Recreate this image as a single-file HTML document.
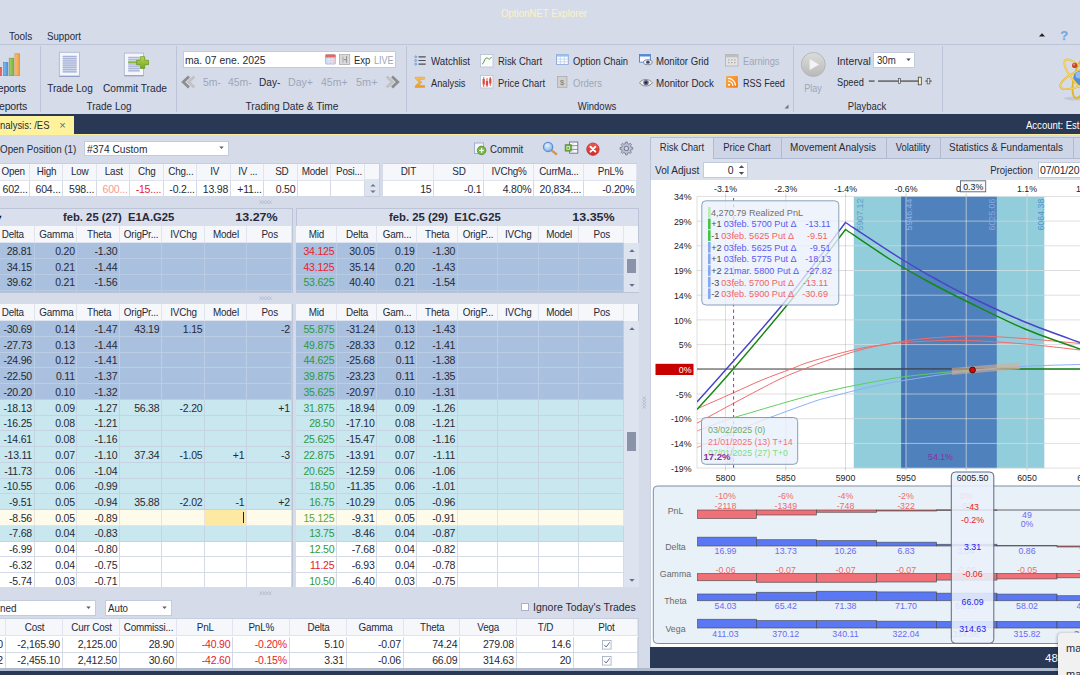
<!DOCTYPE html>
<html><head><meta charset="utf-8"><title>OptionNET Explorer</title>
<style>
html,body{margin:0;padding:0}
html{overflow:hidden;width:1080px;height:675px}
body{width:1080px;height:675px;overflow:hidden;position:relative;background:#d6dbe9;font:10.5px "Liberation Sans",sans-serif;letter-spacing:-0.2px;color:#262a38}
.a{position:absolute;overflow:hidden}
.t{position:absolute;line-height:16px;height:16px;white-space:nowrap}
svg text{letter-spacing:0}
</style></head><body>
<div class="t" style="top:4.8px;left:444.1px;width:200px;text-align:center;color:#fbf3c4;letter-spacing:0px;transform:scaleX(0.9172);transform-origin:center center;">OptionNET Explorer</div>
<div class="t" style="top:28px;left:8.7px;letter-spacing:0px;transform:scaleX(0.9504);transform-origin:left center;">Tools</div>
<div class="t" style="top:28px;left:46.5px;letter-spacing:0px;transform:scaleX(0.9244);transform-origin:left center;">Support</div>
<svg class="a" style="left:1036px;top:30px" width="40" height="14" viewBox="0 0 40 14"><path d="M3 6.6 L6 3.2 L9 6.6 Z" fill="#1e1e1e"/><text x="28.3" y="9.9" font-family="Liberation Sans, sans-serif" font-weight="bold" font-size="13" fill="#6aa5de" stroke="#8fbce8" stroke-width=".3" text-anchor="middle">?</text></svg>
<div class="a" style="left:0px;top:44px;width:1080px;height:1px;background:#bcc5d8;"></div>
<div class="a" style="left:40px;top:46px;width:1px;height:66px;background:#bcc5d8;"></div>
<div class="a" style="left:176px;top:46px;width:1px;height:66px;background:#bcc5d8;"></div>
<div class="a" style="left:406px;top:46px;width:1px;height:66px;background:#bcc5d8;"></div>
<div class="a" style="left:793px;top:46px;width:1px;height:66px;background:#bcc5d8;"></div>
<div class="a" style="left:942px;top:46px;width:1px;height:66px;background:#bcc5d8;"></div>
<svg class="a" style="left:0;top:52px" width="22" height="26" viewBox="0 52 22 26"><defs><linearGradient id="bo" x1="0" x2="1"><stop offset="0" stop-color="#fbc07a"/><stop offset="1" stop-color="#ee9a3e"/></linearGradient><linearGradient id="bgn" x1="0" x2="1"><stop offset="0" stop-color="#a6d26a"/><stop offset="1" stop-color="#7bb041"/></linearGradient><linearGradient id="bb" x1="0" x2="1"><stop offset="0" stop-color="#7fbaf0"/><stop offset="1" stop-color="#4f92d6"/></linearGradient></defs><rect x="-3.2" y="67.3" width="4.5" height="8.4" fill="#e8635a" stroke="#c0463e" stroke-width=".6"/><rect x="3.6" y="62.3" width="4.3" height="13.4" fill="url(#bb)" stroke="#4a86c4" stroke-width=".6"/><rect x="9.2" y="58.2" width="4.5" height="17.5" fill="url(#bgn)" stroke="#6f9f3c" stroke-width=".6"/><rect x="14.9" y="53.8" width="4.8" height="21.9" fill="url(#bo)" stroke="#d98a38" stroke-width=".6"/></svg>
<div class="t" style="top:80px;left:-2.2px;">eports</div>
<div class="t" style="top:98px;left:-1px;">eports</div>
<svg class="a" style="left:56px;top:50px" width="28" height="30" viewBox="56 50 28 30"><rect x="59.6" y="53" width="20" height="24" fill="#8d98be" opacity=".35"/><rect x="59.4" y="52.3" width="20.1" height="23.8" fill="#f5f7fc" stroke="#b3bcda" stroke-width="1"/><path d="M59.4 76.4h20.1" stroke="#8f9bc2" stroke-width="1"/><rect x="62.7" y="55.7" width="14" height="17.3" fill="#d3daee"/><rect x="62.7" y="55.90" width="14" height="1.15" fill="#a9b3d6"/><rect x="62.7" y="58.08" width="14" height="1.15" fill="#a9b3d6"/><rect x="62.7" y="60.26" width="14" height="1.15" fill="#a9b3d6"/><rect x="62.7" y="62.44" width="14" height="1.15" fill="#a9b3d6"/><rect x="62.7" y="64.62" width="14" height="1.15" fill="#a9b3d6"/><rect x="62.7" y="66.80" width="14" height="1.15" fill="#a9b3d6"/><rect x="62.7" y="68.98" width="14" height="1.15" fill="#a9b3d6"/><rect x="62.7" y="71.16" width="14" height="1.15" fill="#a9b3d6"/></svg>
<div class="t" style="top:80px;left:-29.8px;width:200px;text-align:center;letter-spacing:0px;transform:scaleX(0.9582);transform-origin:center center;">Trade Log</div>
<svg class="a" style="left:122px;top:50px" width="30" height="30" viewBox="122 50 30 30"><defs><linearGradient id="pl" x1="0" y1="0" x2="0" y2="1"><stop offset="0" stop-color="#b4d84c"/><stop offset="1" stop-color="#76a628"/></linearGradient></defs><rect x="124.5" y="53.8" width="19" height="22.3" fill="#8d98be" opacity=".3"/><rect x="124.3" y="53.1" width="19.2" height="22.4" fill="#f5f7fc" stroke="#b3bcda" stroke-width="1"/><path d="M124.3 75.8h19.2" stroke="#8f9bc2" stroke-width="1"/><rect x="128.2" y="56.7" width="11.4" height="15.3" fill="#d6dcef"/><rect x="128.2" y="56.90" width="11.4" height="1.15" fill="#adb7d8"/><rect x="128.2" y="59.10" width="11.4" height="1.15" fill="#adb7d8"/><rect x="128.2" y="61.30" width="11.4" height="1.15" fill="#adb7d8"/><rect x="128.2" y="63.50" width="11.4" height="1.15" fill="#adb7d8"/><rect x="128.2" y="65.70" width="11.4" height="1.15" fill="#adb7d8"/><rect x="128.2" y="67.90" width="11.4" height="1.15" fill="#adb7d8"/><rect x="128.2" y="70.10" width="11.4" height="1.15" fill="#adb7d8"/><rect x="128.2" y="61.5" width="10" height="1.7" fill="#86b83a"/><path d="M140.3 56.7h4.4v3.6h3.8v4.4h-3.8v3.7h-4.4v-3.7h-3.7v-4.4h3.7z" fill="url(#pl)" stroke="#6b9a22" stroke-width=".8" stroke-linejoin="round"/></svg>
<div class="t" style="top:80px;left:35.0px;width:200px;text-align:center;letter-spacing:0px;transform:scaleX(0.9706);transform-origin:center center;">Commit Trade</div>
<div class="t" style="top:98px;left:8.7px;width:200px;text-align:center;letter-spacing:0px;transform:scaleX(0.9477);transform-origin:center center;">Trade Log</div>
<div class="a" style="left:183px;top:51px;width:213px;height:17px;background:#fff;border:1px solid #c3cbdc;box-sizing:border-box;"></div>
<div class="t" style="top:52px;left:184.5px;letter-spacing:0px;transform:scaleX(0.9849);transform-origin:left center;">ma. 07 ene. 2025</div>
<svg class="a" style="left:325px;top:54px" width="26" height="11" viewBox="0 0 26 11"><rect x=".5" y=".5" width="10" height="9.6" rx="1" fill="#cfd8f2" stroke="#9fabd6" stroke-width=".7"/><path d="M.5 1.3a.8 .8 0 0 1 .8-.8h8.4a.8 .8 0 0 1 .8 .8v2.1H.5z" fill="#e7695a"/><rect x="7.6" y="3.4" width="2.9" height="6.6" fill="#ecc0c4" opacity=".8"/><path d="M.8 5.6h9.4M.8 7.8h9.4M3.9 3.4v6.6M7.3 3.4v6.6" stroke="#e9eefb" stroke-width=".5"/><rect x="14.5" y=".3" width="10.2" height="10.2" fill="#d9d9d9" stroke="#ababab" stroke-width=".8"/><path d="M17.9 2.6v6.2" stroke="#b4b4b4" stroke-width="1.2"/><path d="M21.6 2.2v6.6M18.6 5.6l2.6 .1" stroke="#858585" stroke-width=".9"/></svg>
<div class="t" style="top:52px;left:353.7px;letter-spacing:0px;transform:scaleX(0.9009);transform-origin:left center;">Exp</div>
<div class="t" style="top:52px;left:373.7px;color:#9ea6b8;letter-spacing:0px;transform:scaleX(0.8566);transform-origin:left center;">LIVE</div>
<svg class="a" style="left:181px;top:75px" width="15" height="14" viewBox="0 0 15 14"><path d="M13.4 1.4 L7.6 7 L13.4 12.6" fill="none" stroke="#c2c2c2" stroke-width="2.8"/><path d="M8 1.4 L2.2 7 L8 12.6" fill="none" stroke="#8e8e8e" stroke-width="2.8"/></svg>
<svg class="a" style="left:385px;top:75px" width="15" height="14" viewBox="0 0 15 14"><path d="M1.6 1.4 L7.4 7 L1.6 12.6" fill="none" stroke="#c2c2c2" stroke-width="2.8"/><path d="M7 1.4 L12.8 7 L7 12.6" fill="none" stroke="#8e8e8e" stroke-width="2.8"/></svg>
<div class="t" style="top:74px;left:203.3px;color:#9ea6b8;letter-spacing:0px;transform:scaleX(0.9948);transform-origin:left center;">5m-</div>
<div class="t" style="top:74px;left:228.3px;color:#9ea6b8;letter-spacing:0px;transform:scaleX(0.9943);transform-origin:left center;">45m-</div>
<div class="t" style="top:74px;left:259.3px;color:#262a38;letter-spacing:0px;transform:scaleX(0.9607);transform-origin:left center;">Day-</div>
<div class="t" style="top:74px;left:287.5px;color:#9ea6b8;letter-spacing:0px;transform:scaleX(1.0076);transform-origin:left center;">Day+</div>
<div class="t" style="top:74px;left:320.5px;color:#9ea6b8;letter-spacing:0px;transform:scaleX(0.9976);transform-origin:left center;">45m+</div>
<div class="t" style="top:74px;left:355.5px;color:#9ea6b8;letter-spacing:0px;transform:scaleX(1.0377);transform-origin:left center;">5m+</div>
<div class="t" style="top:98px;left:191.5px;width:200px;text-align:center;letter-spacing:0px;transform:scaleX(0.9697);transform-origin:center center;">Trading Date &amp; Time</div>
<svg class="a" style="left:413.6px;top:54.6px" width="12.6" height="11" viewBox="0 0 14 13" preserveAspectRatio="none"><circle cx="1.9" cy="2.2" r="1.1" fill="none" stroke="#4a86d0" stroke-width=".8"/><circle cx="1.9" cy="6.5" r="1.1" fill="none" stroke="#4a86d0" stroke-width=".8"/><circle cx="1.9" cy="10.8" r="1.1" fill="none" stroke="#4a86d0" stroke-width=".8"/><path d="M5 2.2h8M5 6.5h8M5 10.8h8" stroke="#4a4e58" stroke-width="1.25"/></svg>
<div class="t" style="top:52.5px;left:430.5px;letter-spacing:0px;transform:scaleX(0.9241);transform-origin:left center;">Watchlist</div>
<svg class="a" style="left:414px;top:75.6px" width="12.2" height="12.6" viewBox="0 0 14 15" preserveAspectRatio="none"><defs><linearGradient id="sg" x1="0" y1="0" x2="0" y2="1"><stop offset="0" stop-color="#fbc45c"/><stop offset="1" stop-color="#f09a28"/></linearGradient></defs><path d="M1.5 1.5h10.5v2.4h-6.6l3.7 3.6-3.7 3.8h6.8v2.3H1.5v-1.9l4.4-4.2L1.5 3.3z" fill="url(#sg)" stroke="#dc9428" stroke-width=".6"/></svg>
<div class="t" style="top:74.7px;left:430.5px;letter-spacing:0px;transform:scaleX(0.8821);transform-origin:left center;">Analysis</div>
<svg class="a" style="left:480px;top:54px" width="14" height="14" viewBox="0 0 14 14"><rect x=".5" y=".5" width="12.5" height="12.5" fill="#fafbfd" stroke="#b9c0d2" stroke-width=".8"/><path d="M2 10c2.2 0 2.2-6 4.6-6s2 3 5-1" fill="none" stroke="#5a9a3a" stroke-width="1"/></svg>
<div class="t" style="top:52.5px;left:497.5px;letter-spacing:0px;transform:scaleX(0.8977);transform-origin:left center;">Risk Chart</div>
<svg class="a" style="left:480px;top:75px" width="14" height="14" viewBox="0 0 14 14"><rect x=".5" y=".5" width="12.5" height="12.5" fill="#fafbfd" stroke="#b9c0d2" stroke-width=".8"/><path d="M3.7 2v10M7 3v9M10.3 2v9" stroke="#d63a2f" stroke-width=".8"/><rect x="2.6" y="4" width="2.2" height="5.5" fill="#e2473b"/><rect x="5.9" y="6" width="2.2" height="4.5" fill="#e2473b"/><rect x="9.2" y="3.5" width="2.2" height="5" fill="#e2473b"/></svg>
<div class="t" style="top:74.7px;left:497.5px;letter-spacing:0px;transform:scaleX(0.895);transform-origin:left center;">Price Chart</div>
<svg class="a" style="left:556px;top:54.4px" width="13.2" height="11.2" viewBox="0 0 14 13" preserveAspectRatio="none"><rect x=".5" y=".5" width="12.5" height="11.5" fill="#fff" stroke="#7f9fd6" stroke-width=".9"/><rect x=".5" y=".5" width="12.5" height="2.6" fill="#9cc0ee"/><path d="M.5 6h12.5M.5 9h12.5M4.6 3v9M8.8 3v9" stroke="#a9c4ea" stroke-width=".7"/></svg>
<div class="t" style="top:52.5px;left:573px;letter-spacing:0px;transform:scaleX(0.8973);transform-origin:left center;">Option Chain</div>
<svg class="a" style="left:557px;top:76px" width="10.8" height="12.2" viewBox="0 0 13 14" preserveAspectRatio="none"><rect x=".5" y=".5" width="11.5" height="12.5" fill="#d0d0d0" stroke="#a9a9a9" stroke-width=".9"/><text x="6.2" y="10.3" font-family="Liberation Sans, sans-serif" font-weight="bold" font-size="9" fill="#8a8a8a" text-anchor="middle">$</text></svg>
<div class="t" style="top:74.7px;left:573px;color:#9ea6b8;letter-spacing:0px;transform:scaleX(0.9036);transform-origin:left center;">Orders</div>
<svg class="a" style="left:639.2px;top:54.4px" width="14.2" height="12" viewBox="0 0 15 14" preserveAspectRatio="none"><rect x=".5" y=".5" width="11.5" height="9" fill="#f6f9ff" stroke="#4a78c0" stroke-width=".9"/><rect x=".5" y=".5" width="11.5" height="2.4" fill="#4d8ad8"/><ellipse cx="9.4" cy="9.6" rx="4.6" ry="2.9" fill="#eef0f4" stroke="#5e6470" stroke-width=".8"/><circle cx="9.4" cy="9.6" r="1.9" fill="#3a4a72"/></svg>
<div class="t" style="top:52.5px;left:656.2px;letter-spacing:0px;transform:scaleX(0.914);transform-origin:left center;">Monitor Grid</div>
<svg class="a" style="left:639px;top:77px" width="15" height="11" viewBox="0 0 15 11"><path d="M.6 5.8C3 1.4 10.4 1.4 13.4 5.8 10.4 10 3 10 .6 5.8z" fill="#f0f1f5" stroke="#8a7a70" stroke-width=".9"/><circle cx="7" cy="5.6" r="2.7" fill="#5a6a8a"/><circle cx="7" cy="5.6" r="1.2" fill="#1c2030"/></svg>
<div class="t" style="top:74.7px;left:656.2px;letter-spacing:0px;transform:scaleX(0.9344);transform-origin:left center;">Monitor Dock</div>
<svg class="a" style="left:725px;top:54px" width="14" height="13" viewBox="0 0 14 13"><rect x=".5" y=".5" width="12.5" height="11.5" fill="#e3e3e3" stroke="#b5b5b5" stroke-width=".9"/><rect x=".5" y=".5" width="12.5" height="2.8" fill="#bdbdbd"/><path d="M3 5.8h1.6M6 5.8h1.6M9 5.8h1.6M3 8.6h1.6M6 8.6h1.6M9 8.6h1.6" stroke="#b0b0b0" stroke-width="1.3"/></svg>
<div class="t" style="top:52.5px;left:742.5px;color:#9ea6b8;letter-spacing:0px;transform:scaleX(0.8805);transform-origin:left center;">Earnings</div>
<svg class="a" style="left:726px;top:76px" width="12.4" height="12.2" viewBox="0 0 13 13" preserveAspectRatio="none"><defs><linearGradient id="rg" x1="0" y1="0" x2="1" y2="1"><stop offset="0" stop-color="#fbab4e"/><stop offset="1" stop-color="#f07c10"/></linearGradient></defs><rect x="0" y="0" width="12.5" height="12.5" rx="1" fill="url(#rg)"/><circle cx="3.2" cy="9.4" r="1.2" fill="#fff"/><path d="M2.2 5.4a5 5 0 0 1 5 5M2.2 2.6a7.8 7.8 0 0 1 7.8 7.8" fill="none" stroke="#fff" stroke-width="1.3"/></svg>
<div class="t" style="top:74.7px;left:742.5px;letter-spacing:0px;transform:scaleX(0.8627);transform-origin:left center;">RSS Feed</div>
<div class="t" style="top:98px;left:497.2px;width:200px;text-align:center;letter-spacing:0px;transform:scaleX(0.9036);transform-origin:center center;">Windows</div>
<svg class="a" style="left:784px;top:104px" width="5" height="5" viewBox="0 0 5 5"><path d="M4.5 .5v4h-4z" fill="#6f7480"/></svg>
<svg class="a" style="left:800px;top:51px" width="27" height="27" viewBox="0 0 27 27"><defs><linearGradient id="pg" x1="0" y1="0" x2="0" y2="1"><stop offset="0" stop-color="#dcdcdc"/><stop offset="1" stop-color="#b9b9b9"/></linearGradient></defs><circle cx="13.3" cy="13.5" r="12" fill="url(#pg)" stroke="#b0b0b0" stroke-width=".8"/><path d="M9.8 8.2 L18.8 13.5 L9.8 18.8z" fill="#f4f4f4" stroke="#e8e8e8" stroke-width=".6"/></svg>
<div class="t" style="top:80px;left:713.2px;width:200px;text-align:center;color:#9ea6b8;letter-spacing:0px;transform:scaleX(0.8563);transform-origin:center center;">Play</div>
<div class="t" style="top:52.5px;left:836.9px;letter-spacing:0px;transform:scaleX(0.9815);transform-origin:left center;">Interval</div>
<div class="a" style="left:873px;top:52px;width:42px;height:16px;background:#fff;border:1px solid #c3cbdc;box-sizing:border-box;"></div>
<div class="t" style="top:52.3px;left:877px;letter-spacing:0px;transform:scaleX(0.9199);transform-origin:left center;">30m</div>
<svg class="a" style="left:905.5px;top:58.3px" width="5" height="3.4" viewBox="0 0 6 4"><path d="M.4 .5h5.2L3 3.5z" fill="#454a58"/></svg>
<div class="t" style="top:73.8px;left:836.9px;letter-spacing:0px;transform:scaleX(0.8823);transform-origin:left center;">Speed</div>
<svg class="a" style="left:867px;top:75px" width="68" height="13" viewBox="0 0 68 13"><rect x="1.8" y="5.3" width="5.8" height="1.6" fill="#6a6a6a"/><rect x="11" y="5.3" width="42" height="1.6" fill="#6a6a6a"/><rect x="31.6" y="3.6" width="1.8" height="5" fill="#e4e4e4" stroke="#555" stroke-width=".7"/><rect x="51.3" y="2.2" width="3" height="7.6" fill="#fdf6c0" stroke="#444" stroke-width=".8"/><rect x="58.4" y="5.3" width="6.2" height="1.6" fill="#6a6a6a"/><rect x="60.2" y="3.3" width="2.6" height="5.6" fill="#e4e4e4" stroke="#555" stroke-width=".7"/></svg>
<div class="t" style="top:98px;left:767.1px;width:200px;text-align:center;letter-spacing:0px;transform:scaleX(0.8989);transform-origin:center center;">Playback</div>
<svg class="a" style="left:1050px;top:50px" width="30" height="54" viewBox="1050 50 30 54"><ellipse cx="1078" cy="98.5" rx="14" ry="2" fill="#c2c8d8"/><g fill="none" stroke="#e3b528" stroke-width="1.9"><ellipse cx="1081" cy="77.7" rx="22.5" ry="7.5" transform="rotate(-24 1081 77.7)"/><ellipse cx="1081" cy="77.7" rx="7" ry="21" transform="rotate(14 1081 77.7)"/></g><circle cx="1081.5" cy="77.7" r="7.8" fill="#4f8fdc"/><circle cx="1079" cy="75" r="3.6" fill="#9cc6f4" opacity=".85"/><g fill="none" stroke="#e9c033" stroke-width="1.9"><ellipse cx="1081" cy="77.7" rx="23.5" ry="7.5" transform="rotate(48 1081 77.7)"/></g><g fill="none" stroke="#f7e08a" stroke-width=".7"><ellipse cx="1081" cy="77.7" rx="22.5" ry="7.5" transform="rotate(-24 1081 77.7)"/><ellipse cx="1081" cy="77.7" rx="23.5" ry="7.5" transform="rotate(48 1081 77.7)"/></g><circle cx="1074.7" cy="65.4" r="2.7" fill="#c4492c"/><circle cx="1074" cy="64.6" r="1" fill="#e8907a"/></svg>
<div class="a" style="left:0px;top:113.9px;width:1080px;height:20.2px;background:#293955;"></div>
<div class="a" style="left:0px;top:134px;width:1080px;height:1.4px;background:#fbee9e;"></div>
<div class="a" style="left:0px;top:116px;width:74.2px;height:19px;background:#fff29d;"></div>
<div class="t" style="top:117px;left:-0.5px;letter-spacing:0px;transform:scaleX(0.9023);transform-origin:left center;">nalysis: /ES</div>
<div class="t" style="top:117.3px;left:59.2px;color:#5d6b82;font-size:11px;">×</div>
<div class="t" style="top:116.5px;left:1026.2px;color:#fff;letter-spacing:0px;transform:scaleX(0.9075);transform-origin:left center;">Account: Est</div>
<div class="t" style="top:140.6px;left:-0.3px;letter-spacing:0px;transform:scaleX(0.9337);transform-origin:left center;">Open Position (1)</div>
<div class="a" style="left:84px;top:141px;width:144.5px;height:14.5px;background:#fff;border:1px solid #c3cbdc;box-sizing:border-box;"></div>
<div class="t" style="top:140.6px;left:87px;letter-spacing:0px;transform:scaleX(0.9687);transform-origin:left center;">#374 Custom</div>
<svg class="a" style="left:219px;top:146px" width="5" height="3.4" viewBox="0 0 6 4"><path d="M.4 .5h5.2L3 3.5z" fill="#555b6b"/></svg>
<svg class="a" style="left:473px;top:142px" width="14" height="14" viewBox="0 0 14 14"><rect x="1.5" y="1" width="9" height="10.5" fill="#f4f6fb" stroke="#9da8c8" stroke-width=".9"/><circle cx="8.6" cy="8.4" r="4.3" fill="#74b944" stroke="#4b8a28" stroke-width=".7"/><path d="M6.3 8.4h4.6M8.6 6.1v4.6" stroke="#fff" stroke-width="1.3"/></svg>
<div class="t" style="top:140.6px;left:490px;letter-spacing:0px;transform:scaleX(0.9206);transform-origin:left center;">Commit</div>
<svg class="a" style="left:541px;top:140px" width="18" height="18" viewBox="541 140 18 18"><defs><radialGradient id="mg" cx=".4" cy=".35" r=".7"><stop offset="0" stop-color="#e4f2fd"/><stop offset="1" stop-color="#7db4ea"/></radialGradient></defs><path d="M551.6 150.4l4.6 3.6" stroke="#d6974a" stroke-width="2.3" stroke-linecap="round"/><circle cx="548.1" cy="146.9" r="4.6" fill="url(#mg)" stroke="#5d8fd2" stroke-width="1.3"/></svg>
<svg class="a" style="left:563px;top:140px" width="17" height="16" viewBox="563 140 17 16"><rect x="569.6" y="142" width="8.2" height="11.2" fill="#f9fafc" stroke="#69718a" stroke-width=".9"/><path d="M569.6 145.7h8.2M569.6 149.4h8.2" stroke="#69718a" stroke-width=".8"/><path d="M573 142v11.2" stroke="#b9c0d2" stroke-width=".6"/><rect x="565.1" y="144.7" width="6.2" height="6.4" fill="#6aa83c" stroke="#4c8426" stroke-width=".6"/><rect x="566.9" y="146.5" width="2.6" height="2.8" fill="none" stroke="#e9f5dc" stroke-width=".8"/></svg>
<svg class="a" style="left:586.2px;top:141.6px" width="14.4" height="14.4" viewBox="0 0 16 16"><defs><linearGradient id="rx" x1="0" y1="0" x2="0" y2="1"><stop offset="0" stop-color="#ee5a50"/><stop offset="1" stop-color="#d42a26"/></linearGradient></defs><circle cx="7.7" cy="8" r="6.9" fill="url(#rx)" stroke="#b83028" stroke-width=".8"/><path d="M5 5.3l5.4 5.4M10.4 5.3L5 10.7" stroke="#fff" stroke-width="2.1" stroke-linecap="round"/></svg>
<svg class="a" style="left:618px;top:140px" width="17" height="17" viewBox="618 140 17 17"><path d="M625.37 143.61L625.55 142.06L627.25 142.06L627.43 143.61L629.06 144.28L630.28 143.31L631.49 144.52L630.52 145.74L631.19 147.37L632.74 147.55L632.74 149.25L631.19 149.43L630.52 151.06L631.49 152.28L630.28 153.49L629.06 152.52L627.43 153.19L627.25 154.74L625.55 154.74L625.37 153.19L623.74 152.52L622.52 153.49L621.31 152.28L622.28 151.06L621.61 149.43L620.06 149.25L620.06 147.55L621.61 147.37L622.28 145.74L621.31 144.52L622.52 143.31L623.74 144.28z" fill="#bcc2d1" stroke="#7c849b" stroke-width="1" stroke-linejoin="round"/><circle cx="626.4" cy="148.4" r="2.1" fill="#d6dbe9" stroke="#7c849b" stroke-width="1.1"/></svg>
<div class="a" style="left:-4px;top:163.2px;width:383.5px;height:34px;background:#fff;border:1px solid #c6cee0;box-sizing:border-box;"></div>
<div class="a" style="left:-4px;top:164.2px;width:34.2px;height:16.5px;background:#f5f7fb;border-right:1px solid #dfe4ee;border-bottom:1px solid #dfe4ee;box-sizing:border-box;"></div><div class="t" style="top:163.35px;left:-13.9px;width:54.2px;text-align:center;transform:scaleX(.94);">Open</div>
<div class="a" style="left:30.2px;top:164.2px;width:33.0px;height:16.5px;background:#f5f7fb;border-right:1px solid #dfe4ee;border-bottom:1px solid #dfe4ee;box-sizing:border-box;"></div><div class="t" style="top:163.35px;left:20.3px;width:53.0px;text-align:center;transform:scaleX(.94);">High</div>
<div class="a" style="left:63.2px;top:164.2px;width:33.5px;height:16.5px;background:#f5f7fb;border-right:1px solid #dfe4ee;border-bottom:1px solid #dfe4ee;box-sizing:border-box;"></div><div class="t" style="top:163.35px;left:53.3px;width:53.5px;text-align:center;transform:scaleX(.94);">Low</div>
<div class="a" style="left:96.7px;top:164.2px;width:33.499999999999986px;height:16.5px;background:#f5f7fb;border-right:1px solid #dfe4ee;border-bottom:1px solid #dfe4ee;box-sizing:border-box;"></div><div class="t" style="top:163.35px;left:86.8px;width:53.499999999999986px;text-align:center;transform:scaleX(.94);">Last</div>
<div class="a" style="left:130.2px;top:164.2px;width:33.5px;height:16.5px;background:#f5f7fb;border-right:1px solid #dfe4ee;border-bottom:1px solid #dfe4ee;box-sizing:border-box;"></div><div class="t" style="top:163.35px;left:120.3px;width:53.5px;text-align:center;transform:scaleX(.94);">Chg</div>
<div class="a" style="left:163.7px;top:164.2px;width:33.70000000000002px;height:16.5px;background:#f5f7fb;border-right:1px solid #dfe4ee;border-bottom:1px solid #dfe4ee;box-sizing:border-box;"></div><div class="t" style="top:163.35px;left:153.8px;width:53.70000000000002px;text-align:center;transform:scaleX(.94);">Chg...</div>
<div class="a" style="left:197.4px;top:164.2px;width:33.29999999999998px;height:16.5px;background:#f5f7fb;border-right:1px solid #dfe4ee;border-bottom:1px solid #dfe4ee;box-sizing:border-box;"></div><div class="t" style="top:163.35px;left:187.5px;width:53.29999999999998px;text-align:center;transform:scaleX(.94);">IV</div>
<div class="a" style="left:230.7px;top:164.2px;width:33.69999999999999px;height:16.5px;background:#f5f7fb;border-right:1px solid #dfe4ee;border-bottom:1px solid #dfe4ee;box-sizing:border-box;"></div><div class="t" style="top:163.35px;left:220.8px;width:53.69999999999999px;text-align:center;transform:scaleX(.94);">IV ...</div>
<div class="a" style="left:264.4px;top:164.2px;width:33.60000000000002px;height:16.5px;background:#f5f7fb;border-right:1px solid #dfe4ee;border-bottom:1px solid #dfe4ee;box-sizing:border-box;"></div><div class="t" style="top:163.35px;left:254.5px;width:53.60000000000002px;text-align:center;transform:scaleX(.94);">SD</div>
<div class="a" style="left:298px;top:164.2px;width:33.39999999999998px;height:16.5px;background:#f5f7fb;border-right:1px solid #dfe4ee;border-bottom:1px solid #dfe4ee;box-sizing:border-box;"></div><div class="t" style="top:163.35px;left:288.1px;width:53.39999999999998px;text-align:center;transform:scaleX(.94);">Model</div>
<div class="a" style="left:331.4px;top:164.2px;width:34.10000000000002px;height:16.5px;background:#f5f7fb;border-right:1px solid #dfe4ee;border-bottom:1px solid #dfe4ee;box-sizing:border-box;"></div><div class="t" style="top:163.35px;left:321.5px;width:54.10000000000002px;text-align:center;transform:scaleX(.94);">Posi...</div>
<div class="a" style="left:-4px;top:180.7px;width:34.2px;height:16.400000000000006px;background:#fff;border-right:1px solid #d3d9e6;border-bottom:1px solid #d3d9e6;box-sizing:border-box;"></div><div class="t" style="top:180.7px;right:1052.4px;text-align:right;">602...</div>
<div class="a" style="left:30.2px;top:180.7px;width:33.0px;height:16.400000000000006px;background:#fff;border-right:1px solid #d3d9e6;border-bottom:1px solid #d3d9e6;box-sizing:border-box;"></div><div class="t" style="top:180.7px;right:1019.4px;text-align:right;">604...</div>
<div class="a" style="left:63.2px;top:180.7px;width:33.5px;height:16.400000000000006px;background:#fff;border-right:1px solid #d3d9e6;border-bottom:1px solid #d3d9e6;box-sizing:border-box;"></div><div class="t" style="top:180.7px;right:985.9px;text-align:right;">598...</div>
<div class="a" style="left:96.7px;top:180.7px;width:33.499999999999986px;height:16.400000000000006px;background:#fff;border-right:1px solid #d3d9e6;border-bottom:1px solid #d3d9e6;box-sizing:border-box;"></div><div class="t" style="top:180.7px;right:952.4px;text-align:right;color:#f59a9a;">600...</div>
<div class="a" style="left:130.2px;top:180.7px;width:33.5px;height:16.400000000000006px;background:#fff;border-right:1px solid #d3d9e6;border-bottom:1px solid #d3d9e6;box-sizing:border-box;"></div><div class="t" style="top:180.7px;right:918.9px;text-align:right;color:#e8202a;">-15....</div>
<div class="a" style="left:163.7px;top:180.7px;width:33.70000000000002px;height:16.400000000000006px;background:#fff;border-right:1px solid #d3d9e6;border-bottom:1px solid #d3d9e6;box-sizing:border-box;"></div><div class="t" style="top:180.7px;right:885.2px;text-align:right;">-0.2...</div>
<div class="a" style="left:197.4px;top:180.7px;width:33.29999999999998px;height:16.400000000000006px;background:#fff;border-right:1px solid #d3d9e6;border-bottom:1px solid #d3d9e6;box-sizing:border-box;"></div><div class="t" style="top:180.7px;right:851.9px;text-align:right;">13.98</div>
<div class="a" style="left:230.7px;top:180.7px;width:33.69999999999999px;height:16.400000000000006px;background:#fff;border-right:1px solid #d3d9e6;border-bottom:1px solid #d3d9e6;box-sizing:border-box;"></div><div class="t" style="top:180.7px;right:818.2px;text-align:right;">+11...</div>
<div class="a" style="left:264.4px;top:180.7px;width:33.60000000000002px;height:16.400000000000006px;background:#fff;border-right:1px solid #d3d9e6;border-bottom:1px solid #d3d9e6;box-sizing:border-box;"></div><div class="t" style="top:180.7px;right:784.6px;text-align:right;">0.50</div>
<div class="a" style="left:298px;top:180.7px;width:33.39999999999998px;height:16.400000000000006px;background:#fff;border-right:1px solid #d3d9e6;border-bottom:1px solid #d3d9e6;box-sizing:border-box;"></div>
<div class="a" style="left:331.4px;top:180.7px;width:34.10000000000002px;height:16.400000000000006px;background:#fff;border-right:1px solid #d3d9e6;border-bottom:1px solid #d3d9e6;box-sizing:border-box;"></div>
<div class="a" style="left:365px;top:163.5px;width:14.3px;height:16.5px;background:#f5f7fb;border-bottom:1px solid #dfe4ee;box-sizing:border-box;"></div>
<div class="a" style="left:365px;top:180px;width:14.3px;height:16.3px;background:#dde3ef;"></div>
<svg class="a" style="left:368.5px;top:182px" width="8" height="13" viewBox="0 0 8 13"><path d="M1.3 4.6L4 1.9l2.7 2.7z" fill="#6f778c"/><path d="M1.3 8.4L4 11.1l2.7-2.7z" fill="#6f778c"/></svg>
<div class="a" style="left:383px;top:163.2px;width:254px;height:34px;background:#fff;border:1px solid #c6cee0;box-sizing:border-box;"></div>
<div class="a" style="left:383.3px;top:164.2px;width:50.69999999999999px;height:16.5px;background:#f5f7fb;border-right:1px solid #dfe4ee;border-bottom:1px solid #dfe4ee;box-sizing:border-box;"></div><div class="t" style="top:163.35px;left:373.4px;width:70.69999999999999px;text-align:center;transform:scaleX(.94);">DIT</div>
<div class="a" style="left:434px;top:164.2px;width:50px;height:16.5px;background:#f5f7fb;border-right:1px solid #dfe4ee;border-bottom:1px solid #dfe4ee;box-sizing:border-box;"></div><div class="t" style="top:163.35px;left:424.1px;width:70px;text-align:center;transform:scaleX(.94);">SD</div>
<div class="a" style="left:484px;top:164.2px;width:50.10000000000002px;height:16.5px;background:#f5f7fb;border-right:1px solid #dfe4ee;border-bottom:1px solid #dfe4ee;box-sizing:border-box;"></div><div class="t" style="top:163.35px;left:474.1px;width:70.10000000000002px;text-align:center;transform:scaleX(.94);">IVChg%</div>
<div class="a" style="left:534.1px;top:164.2px;width:49.799999999999955px;height:16.5px;background:#f5f7fb;border-right:1px solid #dfe4ee;border-bottom:1px solid #dfe4ee;box-sizing:border-box;"></div><div class="t" style="top:163.35px;left:524.2px;width:69.79999999999995px;text-align:center;transform:scaleX(.94);">CurrMa...</div>
<div class="a" style="left:583.9px;top:164.2px;width:53.10000000000002px;height:16.5px;background:#f5f7fb;border-right:1px solid #dfe4ee;border-bottom:1px solid #dfe4ee;box-sizing:border-box;"></div><div class="t" style="top:163.35px;left:574.0px;width:73.10000000000002px;text-align:center;transform:scaleX(.94);">PnL%</div>
<div class="a" style="left:383.3px;top:180.7px;width:50.69999999999999px;height:16.400000000000006px;background:#fff;border-right:1px solid #d3d9e6;border-bottom:1px solid #d3d9e6;box-sizing:border-box;"></div><div class="t" style="top:180.7px;right:648.6px;text-align:right;">15</div>
<div class="a" style="left:434px;top:180.7px;width:50px;height:16.400000000000006px;background:#fff;border-right:1px solid #d3d9e6;border-bottom:1px solid #d3d9e6;box-sizing:border-box;"></div><div class="t" style="top:180.7px;right:598.6px;text-align:right;">-0.1</div>
<div class="a" style="left:484px;top:180.7px;width:50.10000000000002px;height:16.400000000000006px;background:#fff;border-right:1px solid #d3d9e6;border-bottom:1px solid #d3d9e6;box-sizing:border-box;"></div><div class="t" style="top:180.7px;right:548.5px;text-align:right;">4.80%</div>
<div class="a" style="left:534.1px;top:180.7px;width:49.799999999999955px;height:16.400000000000006px;background:#fff;border-right:1px solid #d3d9e6;border-bottom:1px solid #d3d9e6;box-sizing:border-box;"></div><div class="t" style="top:180.7px;right:498.7px;text-align:right;">20,834....</div>
<div class="a" style="left:583.9px;top:180.7px;width:53.10000000000002px;height:16.400000000000006px;background:#fff;border-right:1px solid #d3d9e6;border-bottom:1px solid #d3d9e6;box-sizing:border-box;"></div><div class="t" style="top:180.7px;right:445.6px;text-align:right;">-0.20%</div>
<svg class="a" style="left:259px;top:200px" width="13" height="5" viewBox="0 0 13 5"><path d="M.5 .5l3 3.5M.5 4l3-3.5M3.5 .5l3 3.5M3.5 4l3-3.5M6.5 .5l3 3.5M6.5 4l3-3.5M9.5 .5l3 3.5M9.5 4l3-3.5" stroke="#aeb6c9" stroke-width=".7" fill="none"/></svg>
<div class="a" style="left:-9px;top:207.5px;width:301.5px;height:85px;background:#dfe4ef;border:1px solid #bcc5d8;box-sizing:border-box;"></div>
<div class="a" style="left:296px;top:207.5px;width:342.5px;height:85px;background:#dfe4ef;border:1px solid #bcc5d8;box-sizing:border-box;"></div>
<div class="a" style="left:-8px;top:208.5px;width:299.5px;height:17px;background:#d9dfec;"></div>
<div class="a" style="left:297px;top:208.5px;width:340.5px;height:17px;background:#d9dfec;"></div>
<div class="t" style="top:209.6px;left:-5.5px;color:#14161e;font-size:9px;">▼</div>
<div class="t" style="top:209px;left:62.5px;font-weight:bold;letter-spacing:0;letter-spacing:0px;transform:scaleX(1.0713);transform-origin:left center;white-space:pre;">feb. 25 (27)  E1A.G25</div>
<div class="t" style="top:209px;right:802.5px;text-align:right;font-weight:bold;letter-spacing:0;letter-spacing:0px;transform:scaleX(1.1874);transform-origin:right center;">13.27%</div>
<div class="t" style="top:209px;left:389.3px;font-weight:bold;letter-spacing:0;letter-spacing:0px;transform:scaleX(1.0752);transform-origin:left center;white-space:pre;">feb. 25 (29)  E1C.G25</div>
<div class="t" style="top:209px;right:465px;text-align:right;font-weight:bold;letter-spacing:0;letter-spacing:0px;transform:scaleX(1.1874);transform-origin:right center;">13.35%</div>
<div class="a" style="left:0;top:0;width:1080px;height:291.8px"><div class="a" style="left:-9px;top:226.0px;width:43.6px;height:17.30000000000001px;background:#f5f7fb;border-right:1px solid #dfe4ee;border-bottom:1px solid #dfe4ee;box-sizing:border-box;"></div><div class="t" style="top:225.55px;left:-18.9px;width:63.6px;text-align:center;transform:scaleX(.94);">Delta</div>
<div class="a" style="left:34.6px;top:226.0px;width:42.800000000000004px;height:17.30000000000001px;background:#f5f7fb;border-right:1px solid #dfe4ee;border-bottom:1px solid #dfe4ee;box-sizing:border-box;"></div><div class="t" style="top:225.55px;left:24.7px;width:62.800000000000004px;text-align:center;transform:scaleX(.94);">Gamma</div>
<div class="a" style="left:77.4px;top:226.0px;width:42.5px;height:17.30000000000001px;background:#f5f7fb;border-right:1px solid #dfe4ee;border-bottom:1px solid #dfe4ee;box-sizing:border-box;"></div><div class="t" style="top:225.55px;left:67.5px;width:62.5px;text-align:center;transform:scaleX(.94);">Theta</div>
<div class="a" style="left:119.9px;top:226.0px;width:42.099999999999994px;height:17.30000000000001px;background:#f5f7fb;border-right:1px solid #dfe4ee;border-bottom:1px solid #dfe4ee;box-sizing:border-box;"></div><div class="t" style="top:225.55px;left:110.0px;width:62.099999999999994px;text-align:center;transform:scaleX(.94);">OrigPr...</div>
<div class="a" style="left:162px;top:226.0px;width:43.099999999999994px;height:17.30000000000001px;background:#f5f7fb;border-right:1px solid #dfe4ee;border-bottom:1px solid #dfe4ee;box-sizing:border-box;"></div><div class="t" style="top:225.55px;left:152.1px;width:63.099999999999994px;text-align:center;transform:scaleX(.94);">IVChg</div>
<div class="a" style="left:205.1px;top:226.0px;width:41.900000000000006px;height:17.30000000000001px;background:#f5f7fb;border-right:1px solid #dfe4ee;border-bottom:1px solid #dfe4ee;box-sizing:border-box;"></div><div class="t" style="top:225.55px;left:195.2px;width:61.900000000000006px;text-align:center;transform:scaleX(.94);">Model</div>
<div class="a" style="left:247px;top:226.0px;width:45.39999999999998px;height:17.30000000000001px;background:#f5f7fb;border-right:1px solid #dfe4ee;border-bottom:1px solid #dfe4ee;box-sizing:border-box;"></div><div class="t" style="top:225.55px;left:237.1px;width:65.39999999999998px;text-align:center;transform:scaleX(.94);">Pos</div>
<div class="a" style="left:-9px;top:243.3px;width:43.6px;height:15.740000000000009px;background:#a9c0de;border-right:1px solid #b9cbe4;border-bottom:1px solid #b9cbe4;box-sizing:border-box;"></div><div class="t" style="top:242.97px;right:1048.0px;text-align:right;">28.81</div>
<div class="a" style="left:34.6px;top:243.3px;width:42.800000000000004px;height:15.740000000000009px;background:#a9c0de;border-right:1px solid #b9cbe4;border-bottom:1px solid #b9cbe4;box-sizing:border-box;"></div><div class="t" style="top:242.97px;right:1005.2px;text-align:right;">0.20</div>
<div class="a" style="left:77.4px;top:243.3px;width:42.5px;height:15.740000000000009px;background:#a9c0de;border-right:1px solid #b9cbe4;border-bottom:1px solid #b9cbe4;box-sizing:border-box;"></div><div class="t" style="top:242.97px;right:962.7px;text-align:right;">-1.30</div>
<div class="a" style="left:119.9px;top:243.3px;width:42.099999999999994px;height:15.740000000000009px;background:#a9c0de;border-right:1px solid #b9cbe4;border-bottom:1px solid #b9cbe4;box-sizing:border-box;"></div>
<div class="a" style="left:162px;top:243.3px;width:43.099999999999994px;height:15.740000000000009px;background:#a9c0de;border-right:1px solid #b9cbe4;border-bottom:1px solid #b9cbe4;box-sizing:border-box;"></div>
<div class="a" style="left:205.1px;top:243.3px;width:41.900000000000006px;height:15.740000000000009px;background:#a9c0de;border-right:1px solid #b9cbe4;border-bottom:1px solid #b9cbe4;box-sizing:border-box;"></div>
<div class="a" style="left:247px;top:243.3px;width:45.39999999999998px;height:15.740000000000009px;background:#a9c0de;border-right:1px solid #b9cbe4;border-bottom:1px solid #b9cbe4;box-sizing:border-box;"></div>
<div class="a" style="left:-9px;top:259.04px;width:43.6px;height:15.740000000000009px;background:#a9c0de;border-right:1px solid #b9cbe4;border-bottom:1px solid #b9cbe4;box-sizing:border-box;"></div><div class="t" style="top:258.71px;right:1048.0px;text-align:right;">34.15</div>
<div class="a" style="left:34.6px;top:259.04px;width:42.800000000000004px;height:15.740000000000009px;background:#a9c0de;border-right:1px solid #b9cbe4;border-bottom:1px solid #b9cbe4;box-sizing:border-box;"></div><div class="t" style="top:258.71px;right:1005.2px;text-align:right;">0.21</div>
<div class="a" style="left:77.4px;top:259.04px;width:42.5px;height:15.740000000000009px;background:#a9c0de;border-right:1px solid #b9cbe4;border-bottom:1px solid #b9cbe4;box-sizing:border-box;"></div><div class="t" style="top:258.71px;right:962.7px;text-align:right;">-1.44</div>
<div class="a" style="left:119.9px;top:259.04px;width:42.099999999999994px;height:15.740000000000009px;background:#a9c0de;border-right:1px solid #b9cbe4;border-bottom:1px solid #b9cbe4;box-sizing:border-box;"></div>
<div class="a" style="left:162px;top:259.04px;width:43.099999999999994px;height:15.740000000000009px;background:#a9c0de;border-right:1px solid #b9cbe4;border-bottom:1px solid #b9cbe4;box-sizing:border-box;"></div>
<div class="a" style="left:205.1px;top:259.04px;width:41.900000000000006px;height:15.740000000000009px;background:#a9c0de;border-right:1px solid #b9cbe4;border-bottom:1px solid #b9cbe4;box-sizing:border-box;"></div>
<div class="a" style="left:247px;top:259.04px;width:45.39999999999998px;height:15.740000000000009px;background:#a9c0de;border-right:1px solid #b9cbe4;border-bottom:1px solid #b9cbe4;box-sizing:border-box;"></div>
<div class="a" style="left:-9px;top:274.78000000000003px;width:43.6px;height:15.740000000000009px;background:#a9c0de;border-right:1px solid #b9cbe4;border-bottom:1px solid #b9cbe4;box-sizing:border-box;"></div><div class="t" style="top:274.45px;right:1048.0px;text-align:right;">39.62</div>
<div class="a" style="left:34.6px;top:274.78000000000003px;width:42.800000000000004px;height:15.740000000000009px;background:#a9c0de;border-right:1px solid #b9cbe4;border-bottom:1px solid #b9cbe4;box-sizing:border-box;"></div><div class="t" style="top:274.45px;right:1005.2px;text-align:right;">0.21</div>
<div class="a" style="left:77.4px;top:274.78000000000003px;width:42.5px;height:15.740000000000009px;background:#a9c0de;border-right:1px solid #b9cbe4;border-bottom:1px solid #b9cbe4;box-sizing:border-box;"></div><div class="t" style="top:274.45px;right:962.7px;text-align:right;">-1.56</div>
<div class="a" style="left:119.9px;top:274.78000000000003px;width:42.099999999999994px;height:15.740000000000009px;background:#a9c0de;border-right:1px solid #b9cbe4;border-bottom:1px solid #b9cbe4;box-sizing:border-box;"></div>
<div class="a" style="left:162px;top:274.78000000000003px;width:43.099999999999994px;height:15.740000000000009px;background:#a9c0de;border-right:1px solid #b9cbe4;border-bottom:1px solid #b9cbe4;box-sizing:border-box;"></div>
<div class="a" style="left:205.1px;top:274.78000000000003px;width:41.900000000000006px;height:15.740000000000009px;background:#a9c0de;border-right:1px solid #b9cbe4;border-bottom:1px solid #b9cbe4;box-sizing:border-box;"></div>
<div class="a" style="left:247px;top:274.78000000000003px;width:45.39999999999998px;height:15.740000000000009px;background:#a9c0de;border-right:1px solid #b9cbe4;border-bottom:1px solid #b9cbe4;box-sizing:border-box;"></div>
<div class="a" style="left:-9px;top:290.52000000000004px;width:43.6px;height:15.740000000000009px;background:#a9c0de;border-right:1px solid #b9cbe4;border-bottom:1px solid #b9cbe4;box-sizing:border-box;"></div>
<div class="a" style="left:34.6px;top:290.52000000000004px;width:42.800000000000004px;height:15.740000000000009px;background:#a9c0de;border-right:1px solid #b9cbe4;border-bottom:1px solid #b9cbe4;box-sizing:border-box;"></div>
<div class="a" style="left:77.4px;top:290.52000000000004px;width:42.5px;height:15.740000000000009px;background:#a9c0de;border-right:1px solid #b9cbe4;border-bottom:1px solid #b9cbe4;box-sizing:border-box;"></div>
<div class="a" style="left:119.9px;top:290.52000000000004px;width:42.099999999999994px;height:15.740000000000009px;background:#a9c0de;border-right:1px solid #b9cbe4;border-bottom:1px solid #b9cbe4;box-sizing:border-box;"></div>
<div class="a" style="left:162px;top:290.52000000000004px;width:43.099999999999994px;height:15.740000000000009px;background:#a9c0de;border-right:1px solid #b9cbe4;border-bottom:1px solid #b9cbe4;box-sizing:border-box;"></div>
<div class="a" style="left:205.1px;top:290.52000000000004px;width:41.900000000000006px;height:15.740000000000009px;background:#a9c0de;border-right:1px solid #b9cbe4;border-bottom:1px solid #b9cbe4;box-sizing:border-box;"></div>
<div class="a" style="left:247px;top:290.52000000000004px;width:45.39999999999998px;height:15.740000000000009px;background:#a9c0de;border-right:1px solid #b9cbe4;border-bottom:1px solid #b9cbe4;box-sizing:border-box;"></div></div>
<div class="a" style="left:0;top:0;width:1080px;height:291.8px"><div class="a" style="left:296px;top:226.0px;width:41px;height:17.30000000000001px;background:#f5f7fb;border-right:1px solid #dfe4ee;border-bottom:1px solid #dfe4ee;box-sizing:border-box;"></div><div class="t" style="top:225.55px;left:286.1px;width:61px;text-align:center;transform:scaleX(.94);">Mid</div>
<div class="a" style="left:337px;top:226.0px;width:40.19999999999999px;height:17.30000000000001px;background:#f5f7fb;border-right:1px solid #dfe4ee;border-bottom:1px solid #dfe4ee;box-sizing:border-box;"></div><div class="t" style="top:225.55px;left:327.1px;width:60.19999999999999px;text-align:center;transform:scaleX(.94);">Delta</div>
<div class="a" style="left:377.2px;top:226.0px;width:40.10000000000002px;height:17.30000000000001px;background:#f5f7fb;border-right:1px solid #dfe4ee;border-bottom:1px solid #dfe4ee;box-sizing:border-box;"></div><div class="t" style="top:225.55px;left:367.3px;width:60.10000000000002px;text-align:center;transform:scaleX(.94);">Gam...</div>
<div class="a" style="left:417.3px;top:226.0px;width:40.5px;height:17.30000000000001px;background:#f5f7fb;border-right:1px solid #dfe4ee;border-bottom:1px solid #dfe4ee;box-sizing:border-box;"></div><div class="t" style="top:225.55px;left:407.4px;width:60.5px;text-align:center;transform:scaleX(.94);">Theta</div>
<div class="a" style="left:457.8px;top:226.0px;width:40.19999999999999px;height:17.30000000000001px;background:#f5f7fb;border-right:1px solid #dfe4ee;border-bottom:1px solid #dfe4ee;box-sizing:border-box;"></div><div class="t" style="top:225.55px;left:447.9px;width:60.19999999999999px;text-align:center;transform:scaleX(.94);">OrigP...</div>
<div class="a" style="left:498px;top:226.0px;width:40.5px;height:17.30000000000001px;background:#f5f7fb;border-right:1px solid #dfe4ee;border-bottom:1px solid #dfe4ee;box-sizing:border-box;"></div><div class="t" style="top:225.55px;left:488.1px;width:60.5px;text-align:center;transform:scaleX(.94);">IVChg</div>
<div class="a" style="left:538.5px;top:226.0px;width:40.299999999999955px;height:17.30000000000001px;background:#f5f7fb;border-right:1px solid #dfe4ee;border-bottom:1px solid #dfe4ee;box-sizing:border-box;"></div><div class="t" style="top:225.55px;left:528.6px;width:60.299999999999955px;text-align:center;transform:scaleX(.94);">Model</div>
<div class="a" style="left:578.8px;top:226.0px;width:45.5px;height:17.30000000000001px;background:#f5f7fb;border-right:1px solid #dfe4ee;border-bottom:1px solid #dfe4ee;box-sizing:border-box;"></div><div class="t" style="top:225.55px;left:568.9px;width:65.5px;text-align:center;transform:scaleX(.94);">Pos</div>
<div class="a" style="left:296px;top:243.3px;width:41px;height:15.740000000000009px;background:#a9c0de;border-right:1px solid #b9cbe4;border-bottom:1px solid #b9cbe4;box-sizing:border-box;"></div><div class="t" style="top:242.97px;right:745.6px;text-align:right;color:#e8202a;">34.125</div>
<div class="a" style="left:337px;top:243.3px;width:40.19999999999999px;height:15.740000000000009px;background:#a9c0de;border-right:1px solid #b9cbe4;border-bottom:1px solid #b9cbe4;box-sizing:border-box;"></div><div class="t" style="top:242.97px;right:705.4px;text-align:right;">30.05</div>
<div class="a" style="left:377.2px;top:243.3px;width:40.10000000000002px;height:15.740000000000009px;background:#a9c0de;border-right:1px solid #b9cbe4;border-bottom:1px solid #b9cbe4;box-sizing:border-box;"></div><div class="t" style="top:242.97px;right:665.3px;text-align:right;">0.19</div>
<div class="a" style="left:417.3px;top:243.3px;width:40.5px;height:15.740000000000009px;background:#a9c0de;border-right:1px solid #b9cbe4;border-bottom:1px solid #b9cbe4;box-sizing:border-box;"></div><div class="t" style="top:242.97px;right:624.8px;text-align:right;">-1.30</div>
<div class="a" style="left:457.8px;top:243.3px;width:40.19999999999999px;height:15.740000000000009px;background:#a9c0de;border-right:1px solid #b9cbe4;border-bottom:1px solid #b9cbe4;box-sizing:border-box;"></div>
<div class="a" style="left:498px;top:243.3px;width:40.5px;height:15.740000000000009px;background:#a9c0de;border-right:1px solid #b9cbe4;border-bottom:1px solid #b9cbe4;box-sizing:border-box;"></div>
<div class="a" style="left:538.5px;top:243.3px;width:40.299999999999955px;height:15.740000000000009px;background:#a9c0de;border-right:1px solid #b9cbe4;border-bottom:1px solid #b9cbe4;box-sizing:border-box;"></div>
<div class="a" style="left:578.8px;top:243.3px;width:45.5px;height:15.740000000000009px;background:#a9c0de;border-right:1px solid #b9cbe4;border-bottom:1px solid #b9cbe4;box-sizing:border-box;"></div>
<div class="a" style="left:296px;top:259.04px;width:41px;height:15.740000000000009px;background:#a9c0de;border-right:1px solid #b9cbe4;border-bottom:1px solid #b9cbe4;box-sizing:border-box;"></div><div class="t" style="top:258.71px;right:745.6px;text-align:right;color:#e8202a;">43.125</div>
<div class="a" style="left:337px;top:259.04px;width:40.19999999999999px;height:15.740000000000009px;background:#a9c0de;border-right:1px solid #b9cbe4;border-bottom:1px solid #b9cbe4;box-sizing:border-box;"></div><div class="t" style="top:258.71px;right:705.4px;text-align:right;">35.14</div>
<div class="a" style="left:377.2px;top:259.04px;width:40.10000000000002px;height:15.740000000000009px;background:#a9c0de;border-right:1px solid #b9cbe4;border-bottom:1px solid #b9cbe4;box-sizing:border-box;"></div><div class="t" style="top:258.71px;right:665.3px;text-align:right;">0.20</div>
<div class="a" style="left:417.3px;top:259.04px;width:40.5px;height:15.740000000000009px;background:#a9c0de;border-right:1px solid #b9cbe4;border-bottom:1px solid #b9cbe4;box-sizing:border-box;"></div><div class="t" style="top:258.71px;right:624.8px;text-align:right;">-1.43</div>
<div class="a" style="left:457.8px;top:259.04px;width:40.19999999999999px;height:15.740000000000009px;background:#a9c0de;border-right:1px solid #b9cbe4;border-bottom:1px solid #b9cbe4;box-sizing:border-box;"></div>
<div class="a" style="left:498px;top:259.04px;width:40.5px;height:15.740000000000009px;background:#a9c0de;border-right:1px solid #b9cbe4;border-bottom:1px solid #b9cbe4;box-sizing:border-box;"></div>
<div class="a" style="left:538.5px;top:259.04px;width:40.299999999999955px;height:15.740000000000009px;background:#a9c0de;border-right:1px solid #b9cbe4;border-bottom:1px solid #b9cbe4;box-sizing:border-box;"></div>
<div class="a" style="left:578.8px;top:259.04px;width:45.5px;height:15.740000000000009px;background:#a9c0de;border-right:1px solid #b9cbe4;border-bottom:1px solid #b9cbe4;box-sizing:border-box;"></div>
<div class="a" style="left:296px;top:274.78000000000003px;width:41px;height:15.740000000000009px;background:#a9c0de;border-right:1px solid #b9cbe4;border-bottom:1px solid #b9cbe4;box-sizing:border-box;"></div><div class="t" style="top:274.45px;right:745.6px;text-align:right;color:#2e9a3c;">53.625</div>
<div class="a" style="left:337px;top:274.78000000000003px;width:40.19999999999999px;height:15.740000000000009px;background:#a9c0de;border-right:1px solid #b9cbe4;border-bottom:1px solid #b9cbe4;box-sizing:border-box;"></div><div class="t" style="top:274.45px;right:705.4px;text-align:right;">40.40</div>
<div class="a" style="left:377.2px;top:274.78000000000003px;width:40.10000000000002px;height:15.740000000000009px;background:#a9c0de;border-right:1px solid #b9cbe4;border-bottom:1px solid #b9cbe4;box-sizing:border-box;"></div><div class="t" style="top:274.45px;right:665.3px;text-align:right;">0.21</div>
<div class="a" style="left:417.3px;top:274.78000000000003px;width:40.5px;height:15.740000000000009px;background:#a9c0de;border-right:1px solid #b9cbe4;border-bottom:1px solid #b9cbe4;box-sizing:border-box;"></div><div class="t" style="top:274.45px;right:624.8px;text-align:right;">-1.54</div>
<div class="a" style="left:457.8px;top:274.78000000000003px;width:40.19999999999999px;height:15.740000000000009px;background:#a9c0de;border-right:1px solid #b9cbe4;border-bottom:1px solid #b9cbe4;box-sizing:border-box;"></div>
<div class="a" style="left:498px;top:274.78000000000003px;width:40.5px;height:15.740000000000009px;background:#a9c0de;border-right:1px solid #b9cbe4;border-bottom:1px solid #b9cbe4;box-sizing:border-box;"></div>
<div class="a" style="left:538.5px;top:274.78000000000003px;width:40.299999999999955px;height:15.740000000000009px;background:#a9c0de;border-right:1px solid #b9cbe4;border-bottom:1px solid #b9cbe4;box-sizing:border-box;"></div>
<div class="a" style="left:578.8px;top:274.78000000000003px;width:45.5px;height:15.740000000000009px;background:#a9c0de;border-right:1px solid #b9cbe4;border-bottom:1px solid #b9cbe4;box-sizing:border-box;"></div>
<div class="a" style="left:296px;top:290.52000000000004px;width:41px;height:15.740000000000009px;background:#a9c0de;border-right:1px solid #b9cbe4;border-bottom:1px solid #b9cbe4;box-sizing:border-box;"></div>
<div class="a" style="left:337px;top:290.52000000000004px;width:40.19999999999999px;height:15.740000000000009px;background:#a9c0de;border-right:1px solid #b9cbe4;border-bottom:1px solid #b9cbe4;box-sizing:border-box;"></div>
<div class="a" style="left:377.2px;top:290.52000000000004px;width:40.10000000000002px;height:15.740000000000009px;background:#a9c0de;border-right:1px solid #b9cbe4;border-bottom:1px solid #b9cbe4;box-sizing:border-box;"></div>
<div class="a" style="left:417.3px;top:290.52000000000004px;width:40.5px;height:15.740000000000009px;background:#a9c0de;border-right:1px solid #b9cbe4;border-bottom:1px solid #b9cbe4;box-sizing:border-box;"></div>
<div class="a" style="left:457.8px;top:290.52000000000004px;width:40.19999999999999px;height:15.740000000000009px;background:#a9c0de;border-right:1px solid #b9cbe4;border-bottom:1px solid #b9cbe4;box-sizing:border-box;"></div>
<div class="a" style="left:498px;top:290.52000000000004px;width:40.5px;height:15.740000000000009px;background:#a9c0de;border-right:1px solid #b9cbe4;border-bottom:1px solid #b9cbe4;box-sizing:border-box;"></div>
<div class="a" style="left:538.5px;top:290.52000000000004px;width:40.299999999999955px;height:15.740000000000009px;background:#a9c0de;border-right:1px solid #b9cbe4;border-bottom:1px solid #b9cbe4;box-sizing:border-box;"></div>
<div class="a" style="left:578.8px;top:290.52000000000004px;width:45.5px;height:15.740000000000009px;background:#a9c0de;border-right:1px solid #b9cbe4;border-bottom:1px solid #b9cbe4;box-sizing:border-box;"></div></div>
<div class="a" style="left:624px;top:225.5px;width:14px;height:17.8px;background:#f5f7fb;"></div>
<div class="a" style="left:624px;top:243.3px;width:14.5px;height:48.30000000000001px;background:#dde3ef;"></div><svg class="a" style="left:627.5px;top:248.3px" width="8" height="5" viewBox="0 0 8 5"><path d="M1.3 4L4 1.3 6.7 4z" fill="#666e83"/></svg><svg class="a" style="left:627.5px;top:282.6px" width="8" height="5" viewBox="0 0 8 5"><path d="M1.3 1L4 3.7 6.7 1z" fill="#666e83"/></svg><div class="a" style="left:627px;top:259px;width:8.5px;height:14px;background:#8a93a8;"></div>
<svg class="a" style="left:259px;top:296px" width="13" height="5" viewBox="0 0 13 5"><path d="M.5 .5l3 3.5M.5 4l3-3.5M3.5 .5l3 3.5M3.5 4l3-3.5M6.5 .5l3 3.5M6.5 4l3-3.5M9.5 .5l3 3.5M9.5 4l3-3.5" stroke="#aeb6c9" stroke-width=".7" fill="none"/></svg>
<div class="a" style="left:-9px;top:303.5px;width:301.5px;height:283.7px;background:#fff;border:1px solid #bcc5d8;box-sizing:border-box;border-bottom:none;"></div>
<div class="a" style="left:296px;top:303.5px;width:342.5px;height:283.7px;background:#fff;border:1px solid #bcc5d8;box-sizing:border-box;border-bottom:none;"></div>
<div class="a" style="left:0;top:0;width:1080px;height:587.4px"><div class="a" style="left:-9px;top:304.0px;width:43.6px;height:17.19999999999999px;background:#f5f7fb;border-right:1px solid #dfe4ee;border-bottom:1px solid #dfe4ee;box-sizing:border-box;"></div><div class="t" style="top:303.5px;left:-18.9px;width:63.6px;text-align:center;transform:scaleX(.94);">Delta</div>
<div class="a" style="left:34.6px;top:304.0px;width:42.800000000000004px;height:17.19999999999999px;background:#f5f7fb;border-right:1px solid #dfe4ee;border-bottom:1px solid #dfe4ee;box-sizing:border-box;"></div><div class="t" style="top:303.5px;left:24.7px;width:62.800000000000004px;text-align:center;transform:scaleX(.94);">Gamma</div>
<div class="a" style="left:77.4px;top:304.0px;width:42.5px;height:17.19999999999999px;background:#f5f7fb;border-right:1px solid #dfe4ee;border-bottom:1px solid #dfe4ee;box-sizing:border-box;"></div><div class="t" style="top:303.5px;left:67.5px;width:62.5px;text-align:center;transform:scaleX(.94);">Theta</div>
<div class="a" style="left:119.9px;top:304.0px;width:42.099999999999994px;height:17.19999999999999px;background:#f5f7fb;border-right:1px solid #dfe4ee;border-bottom:1px solid #dfe4ee;box-sizing:border-box;"></div><div class="t" style="top:303.5px;left:110.0px;width:62.099999999999994px;text-align:center;transform:scaleX(.94);">OrigPr...</div>
<div class="a" style="left:162px;top:304.0px;width:43.099999999999994px;height:17.19999999999999px;background:#f5f7fb;border-right:1px solid #dfe4ee;border-bottom:1px solid #dfe4ee;box-sizing:border-box;"></div><div class="t" style="top:303.5px;left:152.1px;width:63.099999999999994px;text-align:center;transform:scaleX(.94);">IVChg</div>
<div class="a" style="left:205.1px;top:304.0px;width:41.900000000000006px;height:17.19999999999999px;background:#f5f7fb;border-right:1px solid #dfe4ee;border-bottom:1px solid #dfe4ee;box-sizing:border-box;"></div><div class="t" style="top:303.5px;left:195.2px;width:61.900000000000006px;text-align:center;transform:scaleX(.94);">Model</div>
<div class="a" style="left:247px;top:304.0px;width:45.39999999999998px;height:17.19999999999999px;background:#f5f7fb;border-right:1px solid #dfe4ee;border-bottom:1px solid #dfe4ee;box-sizing:border-box;"></div><div class="t" style="top:303.5px;left:237.1px;width:65.39999999999998px;text-align:center;transform:scaleX(.94);">Pos</div>
<div class="a" style="left:-9px;top:321.2px;width:43.6px;height:15.740000000000009px;background:#a9c0de;border-right:1px solid #bccde6;border-bottom:1px solid #bccde6;box-sizing:border-box;"></div><div class="t" style="top:320.87px;right:1048.0px;text-align:right;">-30.69</div>
<div class="a" style="left:34.6px;top:321.2px;width:42.800000000000004px;height:15.740000000000009px;background:#a9c0de;border-right:1px solid #bccde6;border-bottom:1px solid #bccde6;box-sizing:border-box;"></div><div class="t" style="top:320.87px;right:1005.2px;text-align:right;">0.14</div>
<div class="a" style="left:77.4px;top:321.2px;width:42.5px;height:15.740000000000009px;background:#a9c0de;border-right:1px solid #bccde6;border-bottom:1px solid #bccde6;box-sizing:border-box;"></div><div class="t" style="top:320.87px;right:962.7px;text-align:right;">-1.47</div>
<div class="a" style="left:119.9px;top:321.2px;width:42.099999999999994px;height:15.740000000000009px;background:#a9c0de;border-right:1px solid #bccde6;border-bottom:1px solid #bccde6;box-sizing:border-box;"></div><div class="t" style="top:320.87px;right:920.6px;text-align:right;">43.19</div>
<div class="a" style="left:162px;top:321.2px;width:43.099999999999994px;height:15.740000000000009px;background:#a9c0de;border-right:1px solid #bccde6;border-bottom:1px solid #bccde6;box-sizing:border-box;"></div><div class="t" style="top:320.87px;right:877.5px;text-align:right;">1.15</div>
<div class="a" style="left:205.1px;top:321.2px;width:41.900000000000006px;height:15.740000000000009px;background:#a9c0de;border-right:1px solid #bccde6;border-bottom:1px solid #bccde6;box-sizing:border-box;"></div>
<div class="a" style="left:247px;top:321.2px;width:45.39999999999998px;height:15.740000000000009px;background:#a9c0de;border-right:1px solid #bccde6;border-bottom:1px solid #bccde6;box-sizing:border-box;"></div><div class="t" style="top:320.87px;right:790.2px;text-align:right;">-2</div>
<div class="a" style="left:-9px;top:336.94px;width:43.6px;height:15.740000000000009px;background:#a9c0de;border-right:1px solid #bccde6;border-bottom:1px solid #bccde6;box-sizing:border-box;"></div><div class="t" style="top:336.61px;right:1048.0px;text-align:right;">-27.73</div>
<div class="a" style="left:34.6px;top:336.94px;width:42.800000000000004px;height:15.740000000000009px;background:#a9c0de;border-right:1px solid #bccde6;border-bottom:1px solid #bccde6;box-sizing:border-box;"></div><div class="t" style="top:336.61px;right:1005.2px;text-align:right;">0.13</div>
<div class="a" style="left:77.4px;top:336.94px;width:42.5px;height:15.740000000000009px;background:#a9c0de;border-right:1px solid #bccde6;border-bottom:1px solid #bccde6;box-sizing:border-box;"></div><div class="t" style="top:336.61px;right:962.7px;text-align:right;">-1.44</div>
<div class="a" style="left:119.9px;top:336.94px;width:42.099999999999994px;height:15.740000000000009px;background:#a9c0de;border-right:1px solid #bccde6;border-bottom:1px solid #bccde6;box-sizing:border-box;"></div>
<div class="a" style="left:162px;top:336.94px;width:43.099999999999994px;height:15.740000000000009px;background:#a9c0de;border-right:1px solid #bccde6;border-bottom:1px solid #bccde6;box-sizing:border-box;"></div>
<div class="a" style="left:205.1px;top:336.94px;width:41.900000000000006px;height:15.740000000000009px;background:#a9c0de;border-right:1px solid #bccde6;border-bottom:1px solid #bccde6;box-sizing:border-box;"></div>
<div class="a" style="left:247px;top:336.94px;width:45.39999999999998px;height:15.740000000000009px;background:#a9c0de;border-right:1px solid #bccde6;border-bottom:1px solid #bccde6;box-sizing:border-box;"></div>
<div class="a" style="left:-9px;top:352.68px;width:43.6px;height:15.740000000000009px;background:#a9c0de;border-right:1px solid #bccde6;border-bottom:1px solid #bccde6;box-sizing:border-box;"></div><div class="t" style="top:352.35px;right:1048.0px;text-align:right;">-24.96</div>
<div class="a" style="left:34.6px;top:352.68px;width:42.800000000000004px;height:15.740000000000009px;background:#a9c0de;border-right:1px solid #bccde6;border-bottom:1px solid #bccde6;box-sizing:border-box;"></div><div class="t" style="top:352.35px;right:1005.2px;text-align:right;">0.12</div>
<div class="a" style="left:77.4px;top:352.68px;width:42.5px;height:15.740000000000009px;background:#a9c0de;border-right:1px solid #bccde6;border-bottom:1px solid #bccde6;box-sizing:border-box;"></div><div class="t" style="top:352.35px;right:962.7px;text-align:right;">-1.41</div>
<div class="a" style="left:119.9px;top:352.68px;width:42.099999999999994px;height:15.740000000000009px;background:#a9c0de;border-right:1px solid #bccde6;border-bottom:1px solid #bccde6;box-sizing:border-box;"></div>
<div class="a" style="left:162px;top:352.68px;width:43.099999999999994px;height:15.740000000000009px;background:#a9c0de;border-right:1px solid #bccde6;border-bottom:1px solid #bccde6;box-sizing:border-box;"></div>
<div class="a" style="left:205.1px;top:352.68px;width:41.900000000000006px;height:15.740000000000009px;background:#a9c0de;border-right:1px solid #bccde6;border-bottom:1px solid #bccde6;box-sizing:border-box;"></div>
<div class="a" style="left:247px;top:352.68px;width:45.39999999999998px;height:15.740000000000009px;background:#a9c0de;border-right:1px solid #bccde6;border-bottom:1px solid #bccde6;box-sizing:border-box;"></div>
<div class="a" style="left:-9px;top:368.42px;width:43.6px;height:15.740000000000009px;background:#a9c0de;border-right:1px solid #bccde6;border-bottom:1px solid #bccde6;box-sizing:border-box;"></div><div class="t" style="top:368.09px;right:1048.0px;text-align:right;">-22.50</div>
<div class="a" style="left:34.6px;top:368.42px;width:42.800000000000004px;height:15.740000000000009px;background:#a9c0de;border-right:1px solid #bccde6;border-bottom:1px solid #bccde6;box-sizing:border-box;"></div><div class="t" style="top:368.09px;right:1005.2px;text-align:right;">0.11</div>
<div class="a" style="left:77.4px;top:368.42px;width:42.5px;height:15.740000000000009px;background:#a9c0de;border-right:1px solid #bccde6;border-bottom:1px solid #bccde6;box-sizing:border-box;"></div><div class="t" style="top:368.09px;right:962.7px;text-align:right;">-1.37</div>
<div class="a" style="left:119.9px;top:368.42px;width:42.099999999999994px;height:15.740000000000009px;background:#a9c0de;border-right:1px solid #bccde6;border-bottom:1px solid #bccde6;box-sizing:border-box;"></div>
<div class="a" style="left:162px;top:368.42px;width:43.099999999999994px;height:15.740000000000009px;background:#a9c0de;border-right:1px solid #bccde6;border-bottom:1px solid #bccde6;box-sizing:border-box;"></div>
<div class="a" style="left:205.1px;top:368.42px;width:41.900000000000006px;height:15.740000000000009px;background:#a9c0de;border-right:1px solid #bccde6;border-bottom:1px solid #bccde6;box-sizing:border-box;"></div>
<div class="a" style="left:247px;top:368.42px;width:45.39999999999998px;height:15.740000000000009px;background:#a9c0de;border-right:1px solid #bccde6;border-bottom:1px solid #bccde6;box-sizing:border-box;"></div>
<div class="a" style="left:-9px;top:384.16px;width:43.6px;height:15.740000000000009px;background:#a9c0de;border-right:1px solid #bccde6;border-bottom:1px solid #bccde6;box-sizing:border-box;"></div><div class="t" style="top:383.83px;right:1048.0px;text-align:right;">-20.20</div>
<div class="a" style="left:34.6px;top:384.16px;width:42.800000000000004px;height:15.740000000000009px;background:#a9c0de;border-right:1px solid #bccde6;border-bottom:1px solid #bccde6;box-sizing:border-box;"></div><div class="t" style="top:383.83px;right:1005.2px;text-align:right;">0.10</div>
<div class="a" style="left:77.4px;top:384.16px;width:42.5px;height:15.740000000000009px;background:#a9c0de;border-right:1px solid #bccde6;border-bottom:1px solid #bccde6;box-sizing:border-box;"></div><div class="t" style="top:383.83px;right:962.7px;text-align:right;">-1.32</div>
<div class="a" style="left:119.9px;top:384.16px;width:42.099999999999994px;height:15.740000000000009px;background:#a9c0de;border-right:1px solid #bccde6;border-bottom:1px solid #bccde6;box-sizing:border-box;"></div>
<div class="a" style="left:162px;top:384.16px;width:43.099999999999994px;height:15.740000000000009px;background:#a9c0de;border-right:1px solid #bccde6;border-bottom:1px solid #bccde6;box-sizing:border-box;"></div>
<div class="a" style="left:205.1px;top:384.16px;width:41.900000000000006px;height:15.740000000000009px;background:#a9c0de;border-right:1px solid #bccde6;border-bottom:1px solid #bccde6;box-sizing:border-box;"></div>
<div class="a" style="left:247px;top:384.16px;width:45.39999999999998px;height:15.740000000000009px;background:#a9c0de;border-right:1px solid #bccde6;border-bottom:1px solid #bccde6;box-sizing:border-box;"></div>
<div class="a" style="left:-9px;top:399.90000000000003px;width:43.6px;height:15.740000000000009px;background:#c8e7ee;border-right:1px solid #c6d3e3;border-bottom:1px solid #c6d3e3;box-sizing:border-box;"></div><div class="t" style="top:399.57px;right:1048.0px;text-align:right;">-18.13</div>
<div class="a" style="left:34.6px;top:399.90000000000003px;width:42.800000000000004px;height:15.740000000000009px;background:#c8e7ee;border-right:1px solid #c6d3e3;border-bottom:1px solid #c6d3e3;box-sizing:border-box;"></div><div class="t" style="top:399.57px;right:1005.2px;text-align:right;">0.09</div>
<div class="a" style="left:77.4px;top:399.90000000000003px;width:42.5px;height:15.740000000000009px;background:#c8e7ee;border-right:1px solid #c6d3e3;border-bottom:1px solid #c6d3e3;box-sizing:border-box;"></div><div class="t" style="top:399.57px;right:962.7px;text-align:right;">-1.27</div>
<div class="a" style="left:119.9px;top:399.90000000000003px;width:42.099999999999994px;height:15.740000000000009px;background:#c8e7ee;border-right:1px solid #c6d3e3;border-bottom:1px solid #c6d3e3;box-sizing:border-box;"></div><div class="t" style="top:399.57px;right:920.6px;text-align:right;">56.38</div>
<div class="a" style="left:162px;top:399.90000000000003px;width:43.099999999999994px;height:15.740000000000009px;background:#c8e7ee;border-right:1px solid #c6d3e3;border-bottom:1px solid #c6d3e3;box-sizing:border-box;"></div><div class="t" style="top:399.57px;right:877.5px;text-align:right;">-2.20</div>
<div class="a" style="left:205.1px;top:399.90000000000003px;width:41.900000000000006px;height:15.740000000000009px;background:#c8e7ee;border-right:1px solid #c6d3e3;border-bottom:1px solid #c6d3e3;box-sizing:border-box;"></div>
<div class="a" style="left:247px;top:399.90000000000003px;width:45.39999999999998px;height:15.740000000000009px;background:#c8e7ee;border-right:1px solid #c6d3e3;border-bottom:1px solid #c6d3e3;box-sizing:border-box;"></div><div class="t" style="top:399.57px;right:790.2px;text-align:right;">+1</div>
<div class="a" style="left:-9px;top:415.64000000000004px;width:43.6px;height:15.740000000000009px;background:#c8e7ee;border-right:1px solid #c6d3e3;border-bottom:1px solid #c6d3e3;box-sizing:border-box;"></div><div class="t" style="top:415.31px;right:1048.0px;text-align:right;">-16.25</div>
<div class="a" style="left:34.6px;top:415.64000000000004px;width:42.800000000000004px;height:15.740000000000009px;background:#c8e7ee;border-right:1px solid #c6d3e3;border-bottom:1px solid #c6d3e3;box-sizing:border-box;"></div><div class="t" style="top:415.31px;right:1005.2px;text-align:right;">0.08</div>
<div class="a" style="left:77.4px;top:415.64000000000004px;width:42.5px;height:15.740000000000009px;background:#c8e7ee;border-right:1px solid #c6d3e3;border-bottom:1px solid #c6d3e3;box-sizing:border-box;"></div><div class="t" style="top:415.31px;right:962.7px;text-align:right;">-1.21</div>
<div class="a" style="left:119.9px;top:415.64000000000004px;width:42.099999999999994px;height:15.740000000000009px;background:#c8e7ee;border-right:1px solid #c6d3e3;border-bottom:1px solid #c6d3e3;box-sizing:border-box;"></div>
<div class="a" style="left:162px;top:415.64000000000004px;width:43.099999999999994px;height:15.740000000000009px;background:#c8e7ee;border-right:1px solid #c6d3e3;border-bottom:1px solid #c6d3e3;box-sizing:border-box;"></div>
<div class="a" style="left:205.1px;top:415.64000000000004px;width:41.900000000000006px;height:15.740000000000009px;background:#c8e7ee;border-right:1px solid #c6d3e3;border-bottom:1px solid #c6d3e3;box-sizing:border-box;"></div>
<div class="a" style="left:247px;top:415.64000000000004px;width:45.39999999999998px;height:15.740000000000009px;background:#c8e7ee;border-right:1px solid #c6d3e3;border-bottom:1px solid #c6d3e3;box-sizing:border-box;"></div>
<div class="a" style="left:-9px;top:431.38000000000005px;width:43.6px;height:15.740000000000009px;background:#c8e7ee;border-right:1px solid #c6d3e3;border-bottom:1px solid #c6d3e3;box-sizing:border-box;"></div><div class="t" style="top:431.05px;right:1048.0px;text-align:right;">-14.61</div>
<div class="a" style="left:34.6px;top:431.38000000000005px;width:42.800000000000004px;height:15.740000000000009px;background:#c8e7ee;border-right:1px solid #c6d3e3;border-bottom:1px solid #c6d3e3;box-sizing:border-box;"></div><div class="t" style="top:431.05px;right:1005.2px;text-align:right;">0.08</div>
<div class="a" style="left:77.4px;top:431.38000000000005px;width:42.5px;height:15.740000000000009px;background:#c8e7ee;border-right:1px solid #c6d3e3;border-bottom:1px solid #c6d3e3;box-sizing:border-box;"></div><div class="t" style="top:431.05px;right:962.7px;text-align:right;">-1.16</div>
<div class="a" style="left:119.9px;top:431.38000000000005px;width:42.099999999999994px;height:15.740000000000009px;background:#c8e7ee;border-right:1px solid #c6d3e3;border-bottom:1px solid #c6d3e3;box-sizing:border-box;"></div>
<div class="a" style="left:162px;top:431.38000000000005px;width:43.099999999999994px;height:15.740000000000009px;background:#c8e7ee;border-right:1px solid #c6d3e3;border-bottom:1px solid #c6d3e3;box-sizing:border-box;"></div>
<div class="a" style="left:205.1px;top:431.38000000000005px;width:41.900000000000006px;height:15.740000000000009px;background:#c8e7ee;border-right:1px solid #c6d3e3;border-bottom:1px solid #c6d3e3;box-sizing:border-box;"></div>
<div class="a" style="left:247px;top:431.38000000000005px;width:45.39999999999998px;height:15.740000000000009px;background:#c8e7ee;border-right:1px solid #c6d3e3;border-bottom:1px solid #c6d3e3;box-sizing:border-box;"></div>
<div class="a" style="left:-9px;top:447.12000000000006px;width:43.6px;height:15.740000000000009px;background:#c8e7ee;border-right:1px solid #c6d3e3;border-bottom:1px solid #c6d3e3;box-sizing:border-box;"></div><div class="t" style="top:446.79px;right:1048.0px;text-align:right;">-13.11</div>
<div class="a" style="left:34.6px;top:447.12000000000006px;width:42.800000000000004px;height:15.740000000000009px;background:#c8e7ee;border-right:1px solid #c6d3e3;border-bottom:1px solid #c6d3e3;box-sizing:border-box;"></div><div class="t" style="top:446.79px;right:1005.2px;text-align:right;">0.07</div>
<div class="a" style="left:77.4px;top:447.12000000000006px;width:42.5px;height:15.740000000000009px;background:#c8e7ee;border-right:1px solid #c6d3e3;border-bottom:1px solid #c6d3e3;box-sizing:border-box;"></div><div class="t" style="top:446.79px;right:962.7px;text-align:right;">-1.10</div>
<div class="a" style="left:119.9px;top:447.12000000000006px;width:42.099999999999994px;height:15.740000000000009px;background:#c8e7ee;border-right:1px solid #c6d3e3;border-bottom:1px solid #c6d3e3;box-sizing:border-box;"></div><div class="t" style="top:446.79px;right:920.6px;text-align:right;">37.34</div>
<div class="a" style="left:162px;top:447.12000000000006px;width:43.099999999999994px;height:15.740000000000009px;background:#c8e7ee;border-right:1px solid #c6d3e3;border-bottom:1px solid #c6d3e3;box-sizing:border-box;"></div><div class="t" style="top:446.79px;right:877.5px;text-align:right;">-1.05</div>
<div class="a" style="left:205.1px;top:447.12000000000006px;width:41.900000000000006px;height:15.740000000000009px;background:#c8e7ee;border-right:1px solid #c6d3e3;border-bottom:1px solid #c6d3e3;box-sizing:border-box;"></div><div class="t" style="top:446.79px;right:835.6px;text-align:right;">+1</div>
<div class="a" style="left:247px;top:447.12000000000006px;width:45.39999999999998px;height:15.740000000000009px;background:#c8e7ee;border-right:1px solid #c6d3e3;border-bottom:1px solid #c6d3e3;box-sizing:border-box;"></div><div class="t" style="top:446.79px;right:790.2px;text-align:right;">-3</div>
<div class="a" style="left:-9px;top:462.86000000000007px;width:43.6px;height:15.740000000000009px;background:#c8e7ee;border-right:1px solid #c6d3e3;border-bottom:1px solid #c6d3e3;box-sizing:border-box;"></div><div class="t" style="top:462.53px;right:1048.0px;text-align:right;">-11.73</div>
<div class="a" style="left:34.6px;top:462.86000000000007px;width:42.800000000000004px;height:15.740000000000009px;background:#c8e7ee;border-right:1px solid #c6d3e3;border-bottom:1px solid #c6d3e3;box-sizing:border-box;"></div><div class="t" style="top:462.53px;right:1005.2px;text-align:right;">0.06</div>
<div class="a" style="left:77.4px;top:462.86000000000007px;width:42.5px;height:15.740000000000009px;background:#c8e7ee;border-right:1px solid #c6d3e3;border-bottom:1px solid #c6d3e3;box-sizing:border-box;"></div><div class="t" style="top:462.53px;right:962.7px;text-align:right;">-1.04</div>
<div class="a" style="left:119.9px;top:462.86000000000007px;width:42.099999999999994px;height:15.740000000000009px;background:#c8e7ee;border-right:1px solid #c6d3e3;border-bottom:1px solid #c6d3e3;box-sizing:border-box;"></div>
<div class="a" style="left:162px;top:462.86000000000007px;width:43.099999999999994px;height:15.740000000000009px;background:#c8e7ee;border-right:1px solid #c6d3e3;border-bottom:1px solid #c6d3e3;box-sizing:border-box;"></div>
<div class="a" style="left:205.1px;top:462.86000000000007px;width:41.900000000000006px;height:15.740000000000009px;background:#c8e7ee;border-right:1px solid #c6d3e3;border-bottom:1px solid #c6d3e3;box-sizing:border-box;"></div>
<div class="a" style="left:247px;top:462.86000000000007px;width:45.39999999999998px;height:15.740000000000009px;background:#c8e7ee;border-right:1px solid #c6d3e3;border-bottom:1px solid #c6d3e3;box-sizing:border-box;"></div>
<div class="a" style="left:-9px;top:478.6000000000001px;width:43.6px;height:15.740000000000009px;background:#c8e7ee;border-right:1px solid #c6d3e3;border-bottom:1px solid #c6d3e3;box-sizing:border-box;"></div><div class="t" style="top:478.27px;right:1048.0px;text-align:right;">-10.55</div>
<div class="a" style="left:34.6px;top:478.6000000000001px;width:42.800000000000004px;height:15.740000000000009px;background:#c8e7ee;border-right:1px solid #c6d3e3;border-bottom:1px solid #c6d3e3;box-sizing:border-box;"></div><div class="t" style="top:478.27px;right:1005.2px;text-align:right;">0.06</div>
<div class="a" style="left:77.4px;top:478.6000000000001px;width:42.5px;height:15.740000000000009px;background:#c8e7ee;border-right:1px solid #c6d3e3;border-bottom:1px solid #c6d3e3;box-sizing:border-box;"></div><div class="t" style="top:478.27px;right:962.7px;text-align:right;">-0.99</div>
<div class="a" style="left:119.9px;top:478.6000000000001px;width:42.099999999999994px;height:15.740000000000009px;background:#c8e7ee;border-right:1px solid #c6d3e3;border-bottom:1px solid #c6d3e3;box-sizing:border-box;"></div>
<div class="a" style="left:162px;top:478.6000000000001px;width:43.099999999999994px;height:15.740000000000009px;background:#c8e7ee;border-right:1px solid #c6d3e3;border-bottom:1px solid #c6d3e3;box-sizing:border-box;"></div>
<div class="a" style="left:205.1px;top:478.6000000000001px;width:41.900000000000006px;height:15.740000000000009px;background:#c8e7ee;border-right:1px solid #c6d3e3;border-bottom:1px solid #c6d3e3;box-sizing:border-box;"></div>
<div class="a" style="left:247px;top:478.6000000000001px;width:45.39999999999998px;height:15.740000000000009px;background:#c8e7ee;border-right:1px solid #c6d3e3;border-bottom:1px solid #c6d3e3;box-sizing:border-box;"></div>
<div class="a" style="left:-9px;top:494.3400000000001px;width:43.6px;height:15.740000000000009px;background:#c8e7ee;border-right:1px solid #c6d3e3;border-bottom:1px solid #c6d3e3;box-sizing:border-box;"></div><div class="t" style="top:494.01px;right:1048.0px;text-align:right;">-9.51</div>
<div class="a" style="left:34.6px;top:494.3400000000001px;width:42.800000000000004px;height:15.740000000000009px;background:#c8e7ee;border-right:1px solid #c6d3e3;border-bottom:1px solid #c6d3e3;box-sizing:border-box;"></div><div class="t" style="top:494.01px;right:1005.2px;text-align:right;">0.05</div>
<div class="a" style="left:77.4px;top:494.3400000000001px;width:42.5px;height:15.740000000000009px;background:#c8e7ee;border-right:1px solid #c6d3e3;border-bottom:1px solid #c6d3e3;box-sizing:border-box;"></div><div class="t" style="top:494.01px;right:962.7px;text-align:right;">-0.94</div>
<div class="a" style="left:119.9px;top:494.3400000000001px;width:42.099999999999994px;height:15.740000000000009px;background:#c8e7ee;border-right:1px solid #c6d3e3;border-bottom:1px solid #c6d3e3;box-sizing:border-box;"></div><div class="t" style="top:494.01px;right:920.6px;text-align:right;">35.88</div>
<div class="a" style="left:162px;top:494.3400000000001px;width:43.099999999999994px;height:15.740000000000009px;background:#c8e7ee;border-right:1px solid #c6d3e3;border-bottom:1px solid #c6d3e3;box-sizing:border-box;"></div><div class="t" style="top:494.01px;right:877.5px;text-align:right;">-2.02</div>
<div class="a" style="left:205.1px;top:494.3400000000001px;width:41.900000000000006px;height:15.740000000000009px;background:#c8e7ee;border-right:1px solid #c6d3e3;border-bottom:1px solid #c6d3e3;box-sizing:border-box;"></div><div class="t" style="top:494.01px;right:835.6px;text-align:right;">-1</div>
<div class="a" style="left:247px;top:494.3400000000001px;width:45.39999999999998px;height:15.740000000000009px;background:#c8e7ee;border-right:1px solid #c6d3e3;border-bottom:1px solid #c6d3e3;box-sizing:border-box;"></div><div class="t" style="top:494.01px;right:790.2px;text-align:right;">+2</div>
<div class="a" style="left:-9px;top:510.0800000000001px;width:43.6px;height:15.739999999999952px;background:#fffbea;border-right:1px solid #e6e4dc;border-bottom:1px solid #e6e4dc;box-sizing:border-box;"></div><div class="t" style="top:509.75px;right:1048.0px;text-align:right;">-8.56</div>
<div class="a" style="left:34.6px;top:510.0800000000001px;width:42.800000000000004px;height:15.739999999999952px;background:#fffbea;border-right:1px solid #e6e4dc;border-bottom:1px solid #e6e4dc;box-sizing:border-box;"></div><div class="t" style="top:509.75px;right:1005.2px;text-align:right;">0.05</div>
<div class="a" style="left:77.4px;top:510.0800000000001px;width:42.5px;height:15.739999999999952px;background:#fffbea;border-right:1px solid #e6e4dc;border-bottom:1px solid #e6e4dc;box-sizing:border-box;"></div><div class="t" style="top:509.75px;right:962.7px;text-align:right;">-0.89</div>
<div class="a" style="left:119.9px;top:510.0800000000001px;width:42.099999999999994px;height:15.739999999999952px;background:#fffbea;border-right:1px solid #e6e4dc;border-bottom:1px solid #e6e4dc;box-sizing:border-box;"></div>
<div class="a" style="left:162px;top:510.0800000000001px;width:43.099999999999994px;height:15.739999999999952px;background:#fffbea;border-right:1px solid #e6e4dc;border-bottom:1px solid #e6e4dc;box-sizing:border-box;"></div>
<div class="a" style="left:205.1px;top:510.0800000000001px;width:41.900000000000006px;height:15.739999999999952px;background:#fde9a2;border-right:1px solid #e6e4dc;border-bottom:1px solid #e6e4dc;box-sizing:border-box;"></div>
<div class="a" style="left:247px;top:510.0800000000001px;width:45.39999999999998px;height:15.739999999999952px;background:#fffbea;border-right:1px solid #e6e4dc;border-bottom:1px solid #e6e4dc;box-sizing:border-box;"></div>
<div class="a" style="left:-9px;top:525.82px;width:43.6px;height:15.740000000000009px;background:#c8e7ee;border-right:1px solid #c6d3e3;border-bottom:1px solid #c6d3e3;box-sizing:border-box;"></div><div class="t" style="top:525.49px;right:1048.0px;text-align:right;">-7.68</div>
<div class="a" style="left:34.6px;top:525.82px;width:42.800000000000004px;height:15.740000000000009px;background:#c8e7ee;border-right:1px solid #c6d3e3;border-bottom:1px solid #c6d3e3;box-sizing:border-box;"></div><div class="t" style="top:525.49px;right:1005.2px;text-align:right;">0.04</div>
<div class="a" style="left:77.4px;top:525.82px;width:42.5px;height:15.740000000000009px;background:#c8e7ee;border-right:1px solid #c6d3e3;border-bottom:1px solid #c6d3e3;box-sizing:border-box;"></div><div class="t" style="top:525.49px;right:962.7px;text-align:right;">-0.83</div>
<div class="a" style="left:119.9px;top:525.82px;width:42.099999999999994px;height:15.740000000000009px;background:#c8e7ee;border-right:1px solid #c6d3e3;border-bottom:1px solid #c6d3e3;box-sizing:border-box;"></div>
<div class="a" style="left:162px;top:525.82px;width:43.099999999999994px;height:15.740000000000009px;background:#c8e7ee;border-right:1px solid #c6d3e3;border-bottom:1px solid #c6d3e3;box-sizing:border-box;"></div>
<div class="a" style="left:205.1px;top:525.82px;width:41.900000000000006px;height:15.740000000000009px;background:#c8e7ee;border-right:1px solid #c6d3e3;border-bottom:1px solid #c6d3e3;box-sizing:border-box;"></div>
<div class="a" style="left:247px;top:525.82px;width:45.39999999999998px;height:15.740000000000009px;background:#c8e7ee;border-right:1px solid #c6d3e3;border-bottom:1px solid #c6d3e3;box-sizing:border-box;"></div>
<div class="a" style="left:-9px;top:541.5600000000001px;width:43.6px;height:15.740000000000009px;background:#fff;border-right:1px solid #d6dae6;border-bottom:1px solid #d6dae6;box-sizing:border-box;"></div><div class="t" style="top:541.23px;right:1048.0px;text-align:right;">-6.99</div>
<div class="a" style="left:34.6px;top:541.5600000000001px;width:42.800000000000004px;height:15.740000000000009px;background:#fff;border-right:1px solid #d6dae6;border-bottom:1px solid #d6dae6;box-sizing:border-box;"></div><div class="t" style="top:541.23px;right:1005.2px;text-align:right;">0.04</div>
<div class="a" style="left:77.4px;top:541.5600000000001px;width:42.5px;height:15.740000000000009px;background:#fff;border-right:1px solid #d6dae6;border-bottom:1px solid #d6dae6;box-sizing:border-box;"></div><div class="t" style="top:541.23px;right:962.7px;text-align:right;">-0.80</div>
<div class="a" style="left:119.9px;top:541.5600000000001px;width:42.099999999999994px;height:15.740000000000009px;background:#fff;border-right:1px solid #d6dae6;border-bottom:1px solid #d6dae6;box-sizing:border-box;"></div>
<div class="a" style="left:162px;top:541.5600000000001px;width:43.099999999999994px;height:15.740000000000009px;background:#fff;border-right:1px solid #d6dae6;border-bottom:1px solid #d6dae6;box-sizing:border-box;"></div>
<div class="a" style="left:205.1px;top:541.5600000000001px;width:41.900000000000006px;height:15.740000000000009px;background:#fff;border-right:1px solid #d6dae6;border-bottom:1px solid #d6dae6;box-sizing:border-box;"></div>
<div class="a" style="left:247px;top:541.5600000000001px;width:45.39999999999998px;height:15.740000000000009px;background:#fff;border-right:1px solid #d6dae6;border-bottom:1px solid #d6dae6;box-sizing:border-box;"></div>
<div class="a" style="left:-9px;top:557.3000000000001px;width:43.6px;height:15.740000000000009px;background:#fff;border-right:1px solid #d6dae6;border-bottom:1px solid #d6dae6;box-sizing:border-box;"></div><div class="t" style="top:556.97px;right:1048.0px;text-align:right;">-6.32</div>
<div class="a" style="left:34.6px;top:557.3000000000001px;width:42.800000000000004px;height:15.740000000000009px;background:#fff;border-right:1px solid #d6dae6;border-bottom:1px solid #d6dae6;box-sizing:border-box;"></div><div class="t" style="top:556.97px;right:1005.2px;text-align:right;">0.04</div>
<div class="a" style="left:77.4px;top:557.3000000000001px;width:42.5px;height:15.740000000000009px;background:#fff;border-right:1px solid #d6dae6;border-bottom:1px solid #d6dae6;box-sizing:border-box;"></div><div class="t" style="top:556.97px;right:962.7px;text-align:right;">-0.75</div>
<div class="a" style="left:119.9px;top:557.3000000000001px;width:42.099999999999994px;height:15.740000000000009px;background:#fff;border-right:1px solid #d6dae6;border-bottom:1px solid #d6dae6;box-sizing:border-box;"></div>
<div class="a" style="left:162px;top:557.3000000000001px;width:43.099999999999994px;height:15.740000000000009px;background:#fff;border-right:1px solid #d6dae6;border-bottom:1px solid #d6dae6;box-sizing:border-box;"></div>
<div class="a" style="left:205.1px;top:557.3000000000001px;width:41.900000000000006px;height:15.740000000000009px;background:#fff;border-right:1px solid #d6dae6;border-bottom:1px solid #d6dae6;box-sizing:border-box;"></div>
<div class="a" style="left:247px;top:557.3000000000001px;width:45.39999999999998px;height:15.740000000000009px;background:#fff;border-right:1px solid #d6dae6;border-bottom:1px solid #d6dae6;box-sizing:border-box;"></div>
<div class="a" style="left:-9px;top:573.0400000000001px;width:43.6px;height:15.740000000000009px;background:#fff;border-right:1px solid #d6dae6;border-bottom:1px solid #d6dae6;box-sizing:border-box;"></div><div class="t" style="top:572.71px;right:1048.0px;text-align:right;">-5.74</div>
<div class="a" style="left:34.6px;top:573.0400000000001px;width:42.800000000000004px;height:15.740000000000009px;background:#fff;border-right:1px solid #d6dae6;border-bottom:1px solid #d6dae6;box-sizing:border-box;"></div><div class="t" style="top:572.71px;right:1005.2px;text-align:right;">0.03</div>
<div class="a" style="left:77.4px;top:573.0400000000001px;width:42.5px;height:15.740000000000009px;background:#fff;border-right:1px solid #d6dae6;border-bottom:1px solid #d6dae6;box-sizing:border-box;"></div><div class="t" style="top:572.71px;right:962.7px;text-align:right;">-0.71</div>
<div class="a" style="left:119.9px;top:573.0400000000001px;width:42.099999999999994px;height:15.740000000000009px;background:#fff;border-right:1px solid #d6dae6;border-bottom:1px solid #d6dae6;box-sizing:border-box;"></div>
<div class="a" style="left:162px;top:573.0400000000001px;width:43.099999999999994px;height:15.740000000000009px;background:#fff;border-right:1px solid #d6dae6;border-bottom:1px solid #d6dae6;box-sizing:border-box;"></div>
<div class="a" style="left:205.1px;top:573.0400000000001px;width:41.900000000000006px;height:15.740000000000009px;background:#fff;border-right:1px solid #d6dae6;border-bottom:1px solid #d6dae6;box-sizing:border-box;"></div>
<div class="a" style="left:247px;top:573.0400000000001px;width:45.39999999999998px;height:15.740000000000009px;background:#fff;border-right:1px solid #d6dae6;border-bottom:1px solid #d6dae6;box-sizing:border-box;"></div></div>
<div class="a" style="left:0;top:0;width:1080px;height:587.4px"><div class="a" style="left:296px;top:304.0px;width:41px;height:17.19999999999999px;background:#f5f7fb;border-right:1px solid #dfe4ee;border-bottom:1px solid #dfe4ee;box-sizing:border-box;"></div><div class="t" style="top:303.5px;left:286.1px;width:61px;text-align:center;transform:scaleX(.94);">Mid</div>
<div class="a" style="left:337px;top:304.0px;width:40.19999999999999px;height:17.19999999999999px;background:#f5f7fb;border-right:1px solid #dfe4ee;border-bottom:1px solid #dfe4ee;box-sizing:border-box;"></div><div class="t" style="top:303.5px;left:327.1px;width:60.19999999999999px;text-align:center;transform:scaleX(.94);">Delta</div>
<div class="a" style="left:377.2px;top:304.0px;width:40.10000000000002px;height:17.19999999999999px;background:#f5f7fb;border-right:1px solid #dfe4ee;border-bottom:1px solid #dfe4ee;box-sizing:border-box;"></div><div class="t" style="top:303.5px;left:367.3px;width:60.10000000000002px;text-align:center;transform:scaleX(.94);">Gam...</div>
<div class="a" style="left:417.3px;top:304.0px;width:40.5px;height:17.19999999999999px;background:#f5f7fb;border-right:1px solid #dfe4ee;border-bottom:1px solid #dfe4ee;box-sizing:border-box;"></div><div class="t" style="top:303.5px;left:407.4px;width:60.5px;text-align:center;transform:scaleX(.94);">Theta</div>
<div class="a" style="left:457.8px;top:304.0px;width:40.19999999999999px;height:17.19999999999999px;background:#f5f7fb;border-right:1px solid #dfe4ee;border-bottom:1px solid #dfe4ee;box-sizing:border-box;"></div><div class="t" style="top:303.5px;left:447.9px;width:60.19999999999999px;text-align:center;transform:scaleX(.94);">OrigP...</div>
<div class="a" style="left:498px;top:304.0px;width:40.5px;height:17.19999999999999px;background:#f5f7fb;border-right:1px solid #dfe4ee;border-bottom:1px solid #dfe4ee;box-sizing:border-box;"></div><div class="t" style="top:303.5px;left:488.1px;width:60.5px;text-align:center;transform:scaleX(.94);">IVChg</div>
<div class="a" style="left:538.5px;top:304.0px;width:40.299999999999955px;height:17.19999999999999px;background:#f5f7fb;border-right:1px solid #dfe4ee;border-bottom:1px solid #dfe4ee;box-sizing:border-box;"></div><div class="t" style="top:303.5px;left:528.6px;width:60.299999999999955px;text-align:center;transform:scaleX(.94);">Model</div>
<div class="a" style="left:578.8px;top:304.0px;width:45.5px;height:17.19999999999999px;background:#f5f7fb;border-right:1px solid #dfe4ee;border-bottom:1px solid #dfe4ee;box-sizing:border-box;"></div><div class="t" style="top:303.5px;left:568.9px;width:65.5px;text-align:center;transform:scaleX(.94);">Pos</div>
<div class="a" style="left:296px;top:321.2px;width:41px;height:15.740000000000009px;background:#a9c0de;border-right:1px solid #bccde6;border-bottom:1px solid #bccde6;box-sizing:border-box;"></div><div class="t" style="top:320.87px;right:745.6px;text-align:right;color:#2e9a3c;">55.875</div>
<div class="a" style="left:337px;top:321.2px;width:40.19999999999999px;height:15.740000000000009px;background:#a9c0de;border-right:1px solid #bccde6;border-bottom:1px solid #bccde6;box-sizing:border-box;"></div><div class="t" style="top:320.87px;right:705.4px;text-align:right;">-31.24</div>
<div class="a" style="left:377.2px;top:321.2px;width:40.10000000000002px;height:15.740000000000009px;background:#a9c0de;border-right:1px solid #bccde6;border-bottom:1px solid #bccde6;box-sizing:border-box;"></div><div class="t" style="top:320.87px;right:665.3px;text-align:right;">0.13</div>
<div class="a" style="left:417.3px;top:321.2px;width:40.5px;height:15.740000000000009px;background:#a9c0de;border-right:1px solid #bccde6;border-bottom:1px solid #bccde6;box-sizing:border-box;"></div><div class="t" style="top:320.87px;right:624.8px;text-align:right;">-1.43</div>
<div class="a" style="left:457.8px;top:321.2px;width:40.19999999999999px;height:15.740000000000009px;background:#a9c0de;border-right:1px solid #bccde6;border-bottom:1px solid #bccde6;box-sizing:border-box;"></div>
<div class="a" style="left:498px;top:321.2px;width:40.5px;height:15.740000000000009px;background:#a9c0de;border-right:1px solid #bccde6;border-bottom:1px solid #bccde6;box-sizing:border-box;"></div>
<div class="a" style="left:538.5px;top:321.2px;width:40.299999999999955px;height:15.740000000000009px;background:#a9c0de;border-right:1px solid #bccde6;border-bottom:1px solid #bccde6;box-sizing:border-box;"></div>
<div class="a" style="left:578.8px;top:321.2px;width:45.5px;height:15.740000000000009px;background:#a9c0de;border-right:1px solid #bccde6;border-bottom:1px solid #bccde6;box-sizing:border-box;"></div>
<div class="a" style="left:296px;top:336.94px;width:41px;height:15.740000000000009px;background:#a9c0de;border-right:1px solid #bccde6;border-bottom:1px solid #bccde6;box-sizing:border-box;"></div><div class="t" style="top:336.61px;right:745.6px;text-align:right;color:#2e9a3c;">49.875</div>
<div class="a" style="left:337px;top:336.94px;width:40.19999999999999px;height:15.740000000000009px;background:#a9c0de;border-right:1px solid #bccde6;border-bottom:1px solid #bccde6;box-sizing:border-box;"></div><div class="t" style="top:336.61px;right:705.4px;text-align:right;">-28.33</div>
<div class="a" style="left:377.2px;top:336.94px;width:40.10000000000002px;height:15.740000000000009px;background:#a9c0de;border-right:1px solid #bccde6;border-bottom:1px solid #bccde6;box-sizing:border-box;"></div><div class="t" style="top:336.61px;right:665.3px;text-align:right;">0.12</div>
<div class="a" style="left:417.3px;top:336.94px;width:40.5px;height:15.740000000000009px;background:#a9c0de;border-right:1px solid #bccde6;border-bottom:1px solid #bccde6;box-sizing:border-box;"></div><div class="t" style="top:336.61px;right:624.8px;text-align:right;">-1.41</div>
<div class="a" style="left:457.8px;top:336.94px;width:40.19999999999999px;height:15.740000000000009px;background:#a9c0de;border-right:1px solid #bccde6;border-bottom:1px solid #bccde6;box-sizing:border-box;"></div>
<div class="a" style="left:498px;top:336.94px;width:40.5px;height:15.740000000000009px;background:#a9c0de;border-right:1px solid #bccde6;border-bottom:1px solid #bccde6;box-sizing:border-box;"></div>
<div class="a" style="left:538.5px;top:336.94px;width:40.299999999999955px;height:15.740000000000009px;background:#a9c0de;border-right:1px solid #bccde6;border-bottom:1px solid #bccde6;box-sizing:border-box;"></div>
<div class="a" style="left:578.8px;top:336.94px;width:45.5px;height:15.740000000000009px;background:#a9c0de;border-right:1px solid #bccde6;border-bottom:1px solid #bccde6;box-sizing:border-box;"></div>
<div class="a" style="left:296px;top:352.68px;width:41px;height:15.740000000000009px;background:#a9c0de;border-right:1px solid #bccde6;border-bottom:1px solid #bccde6;box-sizing:border-box;"></div><div class="t" style="top:352.35px;right:745.6px;text-align:right;color:#2e9a3c;">44.625</div>
<div class="a" style="left:337px;top:352.68px;width:40.19999999999999px;height:15.740000000000009px;background:#a9c0de;border-right:1px solid #bccde6;border-bottom:1px solid #bccde6;box-sizing:border-box;"></div><div class="t" style="top:352.35px;right:705.4px;text-align:right;">-25.68</div>
<div class="a" style="left:377.2px;top:352.68px;width:40.10000000000002px;height:15.740000000000009px;background:#a9c0de;border-right:1px solid #bccde6;border-bottom:1px solid #bccde6;box-sizing:border-box;"></div><div class="t" style="top:352.35px;right:665.3px;text-align:right;">0.11</div>
<div class="a" style="left:417.3px;top:352.68px;width:40.5px;height:15.740000000000009px;background:#a9c0de;border-right:1px solid #bccde6;border-bottom:1px solid #bccde6;box-sizing:border-box;"></div><div class="t" style="top:352.35px;right:624.8px;text-align:right;">-1.38</div>
<div class="a" style="left:457.8px;top:352.68px;width:40.19999999999999px;height:15.740000000000009px;background:#a9c0de;border-right:1px solid #bccde6;border-bottom:1px solid #bccde6;box-sizing:border-box;"></div>
<div class="a" style="left:498px;top:352.68px;width:40.5px;height:15.740000000000009px;background:#a9c0de;border-right:1px solid #bccde6;border-bottom:1px solid #bccde6;box-sizing:border-box;"></div>
<div class="a" style="left:538.5px;top:352.68px;width:40.299999999999955px;height:15.740000000000009px;background:#a9c0de;border-right:1px solid #bccde6;border-bottom:1px solid #bccde6;box-sizing:border-box;"></div>
<div class="a" style="left:578.8px;top:352.68px;width:45.5px;height:15.740000000000009px;background:#a9c0de;border-right:1px solid #bccde6;border-bottom:1px solid #bccde6;box-sizing:border-box;"></div>
<div class="a" style="left:296px;top:368.42px;width:41px;height:15.740000000000009px;background:#a9c0de;border-right:1px solid #bccde6;border-bottom:1px solid #bccde6;box-sizing:border-box;"></div><div class="t" style="top:368.09px;right:745.6px;text-align:right;color:#2e9a3c;">39.875</div>
<div class="a" style="left:337px;top:368.42px;width:40.19999999999999px;height:15.740000000000009px;background:#a9c0de;border-right:1px solid #bccde6;border-bottom:1px solid #bccde6;box-sizing:border-box;"></div><div class="t" style="top:368.09px;right:705.4px;text-align:right;">-23.23</div>
<div class="a" style="left:377.2px;top:368.42px;width:40.10000000000002px;height:15.740000000000009px;background:#a9c0de;border-right:1px solid #bccde6;border-bottom:1px solid #bccde6;box-sizing:border-box;"></div><div class="t" style="top:368.09px;right:665.3px;text-align:right;">0.11</div>
<div class="a" style="left:417.3px;top:368.42px;width:40.5px;height:15.740000000000009px;background:#a9c0de;border-right:1px solid #bccde6;border-bottom:1px solid #bccde6;box-sizing:border-box;"></div><div class="t" style="top:368.09px;right:624.8px;text-align:right;">-1.35</div>
<div class="a" style="left:457.8px;top:368.42px;width:40.19999999999999px;height:15.740000000000009px;background:#a9c0de;border-right:1px solid #bccde6;border-bottom:1px solid #bccde6;box-sizing:border-box;"></div>
<div class="a" style="left:498px;top:368.42px;width:40.5px;height:15.740000000000009px;background:#a9c0de;border-right:1px solid #bccde6;border-bottom:1px solid #bccde6;box-sizing:border-box;"></div>
<div class="a" style="left:538.5px;top:368.42px;width:40.299999999999955px;height:15.740000000000009px;background:#a9c0de;border-right:1px solid #bccde6;border-bottom:1px solid #bccde6;box-sizing:border-box;"></div>
<div class="a" style="left:578.8px;top:368.42px;width:45.5px;height:15.740000000000009px;background:#a9c0de;border-right:1px solid #bccde6;border-bottom:1px solid #bccde6;box-sizing:border-box;"></div>
<div class="a" style="left:296px;top:384.16px;width:41px;height:15.740000000000009px;background:#a9c0de;border-right:1px solid #bccde6;border-bottom:1px solid #bccde6;box-sizing:border-box;"></div><div class="t" style="top:383.83px;right:745.6px;text-align:right;color:#2e9a3c;">35.625</div>
<div class="a" style="left:337px;top:384.16px;width:40.19999999999999px;height:15.740000000000009px;background:#a9c0de;border-right:1px solid #bccde6;border-bottom:1px solid #bccde6;box-sizing:border-box;"></div><div class="t" style="top:383.83px;right:705.4px;text-align:right;">-20.97</div>
<div class="a" style="left:377.2px;top:384.16px;width:40.10000000000002px;height:15.740000000000009px;background:#a9c0de;border-right:1px solid #bccde6;border-bottom:1px solid #bccde6;box-sizing:border-box;"></div><div class="t" style="top:383.83px;right:665.3px;text-align:right;">0.10</div>
<div class="a" style="left:417.3px;top:384.16px;width:40.5px;height:15.740000000000009px;background:#a9c0de;border-right:1px solid #bccde6;border-bottom:1px solid #bccde6;box-sizing:border-box;"></div><div class="t" style="top:383.83px;right:624.8px;text-align:right;">-1.31</div>
<div class="a" style="left:457.8px;top:384.16px;width:40.19999999999999px;height:15.740000000000009px;background:#a9c0de;border-right:1px solid #bccde6;border-bottom:1px solid #bccde6;box-sizing:border-box;"></div>
<div class="a" style="left:498px;top:384.16px;width:40.5px;height:15.740000000000009px;background:#a9c0de;border-right:1px solid #bccde6;border-bottom:1px solid #bccde6;box-sizing:border-box;"></div>
<div class="a" style="left:538.5px;top:384.16px;width:40.299999999999955px;height:15.740000000000009px;background:#a9c0de;border-right:1px solid #bccde6;border-bottom:1px solid #bccde6;box-sizing:border-box;"></div>
<div class="a" style="left:578.8px;top:384.16px;width:45.5px;height:15.740000000000009px;background:#a9c0de;border-right:1px solid #bccde6;border-bottom:1px solid #bccde6;box-sizing:border-box;"></div>
<div class="a" style="left:296px;top:399.90000000000003px;width:41px;height:15.740000000000009px;background:#c8e7ee;border-right:1px solid #c6d3e3;border-bottom:1px solid #c6d3e3;box-sizing:border-box;"></div><div class="t" style="top:399.57px;right:745.6px;text-align:right;color:#2e9a3c;">31.875</div>
<div class="a" style="left:337px;top:399.90000000000003px;width:40.19999999999999px;height:15.740000000000009px;background:#c8e7ee;border-right:1px solid #c6d3e3;border-bottom:1px solid #c6d3e3;box-sizing:border-box;"></div><div class="t" style="top:399.57px;right:705.4px;text-align:right;">-18.94</div>
<div class="a" style="left:377.2px;top:399.90000000000003px;width:40.10000000000002px;height:15.740000000000009px;background:#c8e7ee;border-right:1px solid #c6d3e3;border-bottom:1px solid #c6d3e3;box-sizing:border-box;"></div><div class="t" style="top:399.57px;right:665.3px;text-align:right;">0.09</div>
<div class="a" style="left:417.3px;top:399.90000000000003px;width:40.5px;height:15.740000000000009px;background:#c8e7ee;border-right:1px solid #c6d3e3;border-bottom:1px solid #c6d3e3;box-sizing:border-box;"></div><div class="t" style="top:399.57px;right:624.8px;text-align:right;">-1.26</div>
<div class="a" style="left:457.8px;top:399.90000000000003px;width:40.19999999999999px;height:15.740000000000009px;background:#c8e7ee;border-right:1px solid #c6d3e3;border-bottom:1px solid #c6d3e3;box-sizing:border-box;"></div>
<div class="a" style="left:498px;top:399.90000000000003px;width:40.5px;height:15.740000000000009px;background:#c8e7ee;border-right:1px solid #c6d3e3;border-bottom:1px solid #c6d3e3;box-sizing:border-box;"></div>
<div class="a" style="left:538.5px;top:399.90000000000003px;width:40.299999999999955px;height:15.740000000000009px;background:#c8e7ee;border-right:1px solid #c6d3e3;border-bottom:1px solid #c6d3e3;box-sizing:border-box;"></div>
<div class="a" style="left:578.8px;top:399.90000000000003px;width:45.5px;height:15.740000000000009px;background:#c8e7ee;border-right:1px solid #c6d3e3;border-bottom:1px solid #c6d3e3;box-sizing:border-box;"></div>
<div class="a" style="left:296px;top:415.64000000000004px;width:41px;height:15.740000000000009px;background:#c8e7ee;border-right:1px solid #c6d3e3;border-bottom:1px solid #c6d3e3;box-sizing:border-box;"></div><div class="t" style="top:415.31px;right:745.6px;text-align:right;color:#2e9a3c;">28.50</div>
<div class="a" style="left:337px;top:415.64000000000004px;width:40.19999999999999px;height:15.740000000000009px;background:#c8e7ee;border-right:1px solid #c6d3e3;border-bottom:1px solid #c6d3e3;box-sizing:border-box;"></div><div class="t" style="top:415.31px;right:705.4px;text-align:right;">-17.10</div>
<div class="a" style="left:377.2px;top:415.64000000000004px;width:40.10000000000002px;height:15.740000000000009px;background:#c8e7ee;border-right:1px solid #c6d3e3;border-bottom:1px solid #c6d3e3;box-sizing:border-box;"></div><div class="t" style="top:415.31px;right:665.3px;text-align:right;">0.08</div>
<div class="a" style="left:417.3px;top:415.64000000000004px;width:40.5px;height:15.740000000000009px;background:#c8e7ee;border-right:1px solid #c6d3e3;border-bottom:1px solid #c6d3e3;box-sizing:border-box;"></div><div class="t" style="top:415.31px;right:624.8px;text-align:right;">-1.21</div>
<div class="a" style="left:457.8px;top:415.64000000000004px;width:40.19999999999999px;height:15.740000000000009px;background:#c8e7ee;border-right:1px solid #c6d3e3;border-bottom:1px solid #c6d3e3;box-sizing:border-box;"></div>
<div class="a" style="left:498px;top:415.64000000000004px;width:40.5px;height:15.740000000000009px;background:#c8e7ee;border-right:1px solid #c6d3e3;border-bottom:1px solid #c6d3e3;box-sizing:border-box;"></div>
<div class="a" style="left:538.5px;top:415.64000000000004px;width:40.299999999999955px;height:15.740000000000009px;background:#c8e7ee;border-right:1px solid #c6d3e3;border-bottom:1px solid #c6d3e3;box-sizing:border-box;"></div>
<div class="a" style="left:578.8px;top:415.64000000000004px;width:45.5px;height:15.740000000000009px;background:#c8e7ee;border-right:1px solid #c6d3e3;border-bottom:1px solid #c6d3e3;box-sizing:border-box;"></div>
<div class="a" style="left:296px;top:431.38000000000005px;width:41px;height:15.740000000000009px;background:#c8e7ee;border-right:1px solid #c6d3e3;border-bottom:1px solid #c6d3e3;box-sizing:border-box;"></div><div class="t" style="top:431.05px;right:745.6px;text-align:right;color:#2e9a3c;">25.625</div>
<div class="a" style="left:337px;top:431.38000000000005px;width:40.19999999999999px;height:15.740000000000009px;background:#c8e7ee;border-right:1px solid #c6d3e3;border-bottom:1px solid #c6d3e3;box-sizing:border-box;"></div><div class="t" style="top:431.05px;right:705.4px;text-align:right;">-15.47</div>
<div class="a" style="left:377.2px;top:431.38000000000005px;width:40.10000000000002px;height:15.740000000000009px;background:#c8e7ee;border-right:1px solid #c6d3e3;border-bottom:1px solid #c6d3e3;box-sizing:border-box;"></div><div class="t" style="top:431.05px;right:665.3px;text-align:right;">0.08</div>
<div class="a" style="left:417.3px;top:431.38000000000005px;width:40.5px;height:15.740000000000009px;background:#c8e7ee;border-right:1px solid #c6d3e3;border-bottom:1px solid #c6d3e3;box-sizing:border-box;"></div><div class="t" style="top:431.05px;right:624.8px;text-align:right;">-1.16</div>
<div class="a" style="left:457.8px;top:431.38000000000005px;width:40.19999999999999px;height:15.740000000000009px;background:#c8e7ee;border-right:1px solid #c6d3e3;border-bottom:1px solid #c6d3e3;box-sizing:border-box;"></div>
<div class="a" style="left:498px;top:431.38000000000005px;width:40.5px;height:15.740000000000009px;background:#c8e7ee;border-right:1px solid #c6d3e3;border-bottom:1px solid #c6d3e3;box-sizing:border-box;"></div>
<div class="a" style="left:538.5px;top:431.38000000000005px;width:40.299999999999955px;height:15.740000000000009px;background:#c8e7ee;border-right:1px solid #c6d3e3;border-bottom:1px solid #c6d3e3;box-sizing:border-box;"></div>
<div class="a" style="left:578.8px;top:431.38000000000005px;width:45.5px;height:15.740000000000009px;background:#c8e7ee;border-right:1px solid #c6d3e3;border-bottom:1px solid #c6d3e3;box-sizing:border-box;"></div>
<div class="a" style="left:296px;top:447.12000000000006px;width:41px;height:15.740000000000009px;background:#c8e7ee;border-right:1px solid #c6d3e3;border-bottom:1px solid #c6d3e3;box-sizing:border-box;"></div><div class="t" style="top:446.79px;right:745.6px;text-align:right;color:#2e9a3c;">22.875</div>
<div class="a" style="left:337px;top:447.12000000000006px;width:40.19999999999999px;height:15.740000000000009px;background:#c8e7ee;border-right:1px solid #c6d3e3;border-bottom:1px solid #c6d3e3;box-sizing:border-box;"></div><div class="t" style="top:446.79px;right:705.4px;text-align:right;">-13.91</div>
<div class="a" style="left:377.2px;top:447.12000000000006px;width:40.10000000000002px;height:15.740000000000009px;background:#c8e7ee;border-right:1px solid #c6d3e3;border-bottom:1px solid #c6d3e3;box-sizing:border-box;"></div><div class="t" style="top:446.79px;right:665.3px;text-align:right;">0.07</div>
<div class="a" style="left:417.3px;top:447.12000000000006px;width:40.5px;height:15.740000000000009px;background:#c8e7ee;border-right:1px solid #c6d3e3;border-bottom:1px solid #c6d3e3;box-sizing:border-box;"></div><div class="t" style="top:446.79px;right:624.8px;text-align:right;">-1.11</div>
<div class="a" style="left:457.8px;top:447.12000000000006px;width:40.19999999999999px;height:15.740000000000009px;background:#c8e7ee;border-right:1px solid #c6d3e3;border-bottom:1px solid #c6d3e3;box-sizing:border-box;"></div>
<div class="a" style="left:498px;top:447.12000000000006px;width:40.5px;height:15.740000000000009px;background:#c8e7ee;border-right:1px solid #c6d3e3;border-bottom:1px solid #c6d3e3;box-sizing:border-box;"></div>
<div class="a" style="left:538.5px;top:447.12000000000006px;width:40.299999999999955px;height:15.740000000000009px;background:#c8e7ee;border-right:1px solid #c6d3e3;border-bottom:1px solid #c6d3e3;box-sizing:border-box;"></div>
<div class="a" style="left:578.8px;top:447.12000000000006px;width:45.5px;height:15.740000000000009px;background:#c8e7ee;border-right:1px solid #c6d3e3;border-bottom:1px solid #c6d3e3;box-sizing:border-box;"></div>
<div class="a" style="left:296px;top:462.86000000000007px;width:41px;height:15.740000000000009px;background:#c8e7ee;border-right:1px solid #c6d3e3;border-bottom:1px solid #c6d3e3;box-sizing:border-box;"></div><div class="t" style="top:462.53px;right:745.6px;text-align:right;color:#2e9a3c;">20.625</div>
<div class="a" style="left:337px;top:462.86000000000007px;width:40.19999999999999px;height:15.740000000000009px;background:#c8e7ee;border-right:1px solid #c6d3e3;border-bottom:1px solid #c6d3e3;box-sizing:border-box;"></div><div class="t" style="top:462.53px;right:705.4px;text-align:right;">-12.59</div>
<div class="a" style="left:377.2px;top:462.86000000000007px;width:40.10000000000002px;height:15.740000000000009px;background:#c8e7ee;border-right:1px solid #c6d3e3;border-bottom:1px solid #c6d3e3;box-sizing:border-box;"></div><div class="t" style="top:462.53px;right:665.3px;text-align:right;">0.06</div>
<div class="a" style="left:417.3px;top:462.86000000000007px;width:40.5px;height:15.740000000000009px;background:#c8e7ee;border-right:1px solid #c6d3e3;border-bottom:1px solid #c6d3e3;box-sizing:border-box;"></div><div class="t" style="top:462.53px;right:624.8px;text-align:right;">-1.06</div>
<div class="a" style="left:457.8px;top:462.86000000000007px;width:40.19999999999999px;height:15.740000000000009px;background:#c8e7ee;border-right:1px solid #c6d3e3;border-bottom:1px solid #c6d3e3;box-sizing:border-box;"></div>
<div class="a" style="left:498px;top:462.86000000000007px;width:40.5px;height:15.740000000000009px;background:#c8e7ee;border-right:1px solid #c6d3e3;border-bottom:1px solid #c6d3e3;box-sizing:border-box;"></div>
<div class="a" style="left:538.5px;top:462.86000000000007px;width:40.299999999999955px;height:15.740000000000009px;background:#c8e7ee;border-right:1px solid #c6d3e3;border-bottom:1px solid #c6d3e3;box-sizing:border-box;"></div>
<div class="a" style="left:578.8px;top:462.86000000000007px;width:45.5px;height:15.740000000000009px;background:#c8e7ee;border-right:1px solid #c6d3e3;border-bottom:1px solid #c6d3e3;box-sizing:border-box;"></div>
<div class="a" style="left:296px;top:478.6000000000001px;width:41px;height:15.740000000000009px;background:#c8e7ee;border-right:1px solid #c6d3e3;border-bottom:1px solid #c6d3e3;box-sizing:border-box;"></div><div class="t" style="top:478.27px;right:745.6px;text-align:right;color:#2e9a3c;">18.50</div>
<div class="a" style="left:337px;top:478.6000000000001px;width:40.19999999999999px;height:15.740000000000009px;background:#c8e7ee;border-right:1px solid #c6d3e3;border-bottom:1px solid #c6d3e3;box-sizing:border-box;"></div><div class="t" style="top:478.27px;right:705.4px;text-align:right;">-11.35</div>
<div class="a" style="left:377.2px;top:478.6000000000001px;width:40.10000000000002px;height:15.740000000000009px;background:#c8e7ee;border-right:1px solid #c6d3e3;border-bottom:1px solid #c6d3e3;box-sizing:border-box;"></div><div class="t" style="top:478.27px;right:665.3px;text-align:right;">0.06</div>
<div class="a" style="left:417.3px;top:478.6000000000001px;width:40.5px;height:15.740000000000009px;background:#c8e7ee;border-right:1px solid #c6d3e3;border-bottom:1px solid #c6d3e3;box-sizing:border-box;"></div><div class="t" style="top:478.27px;right:624.8px;text-align:right;">-1.01</div>
<div class="a" style="left:457.8px;top:478.6000000000001px;width:40.19999999999999px;height:15.740000000000009px;background:#c8e7ee;border-right:1px solid #c6d3e3;border-bottom:1px solid #c6d3e3;box-sizing:border-box;"></div>
<div class="a" style="left:498px;top:478.6000000000001px;width:40.5px;height:15.740000000000009px;background:#c8e7ee;border-right:1px solid #c6d3e3;border-bottom:1px solid #c6d3e3;box-sizing:border-box;"></div>
<div class="a" style="left:538.5px;top:478.6000000000001px;width:40.299999999999955px;height:15.740000000000009px;background:#c8e7ee;border-right:1px solid #c6d3e3;border-bottom:1px solid #c6d3e3;box-sizing:border-box;"></div>
<div class="a" style="left:578.8px;top:478.6000000000001px;width:45.5px;height:15.740000000000009px;background:#c8e7ee;border-right:1px solid #c6d3e3;border-bottom:1px solid #c6d3e3;box-sizing:border-box;"></div>
<div class="a" style="left:296px;top:494.3400000000001px;width:41px;height:15.740000000000009px;background:#c8e7ee;border-right:1px solid #c6d3e3;border-bottom:1px solid #c6d3e3;box-sizing:border-box;"></div><div class="t" style="top:494.01px;right:745.6px;text-align:right;color:#2e9a3c;">16.75</div>
<div class="a" style="left:337px;top:494.3400000000001px;width:40.19999999999999px;height:15.740000000000009px;background:#c8e7ee;border-right:1px solid #c6d3e3;border-bottom:1px solid #c6d3e3;box-sizing:border-box;"></div><div class="t" style="top:494.01px;right:705.4px;text-align:right;">-10.29</div>
<div class="a" style="left:377.2px;top:494.3400000000001px;width:40.10000000000002px;height:15.740000000000009px;background:#c8e7ee;border-right:1px solid #c6d3e3;border-bottom:1px solid #c6d3e3;box-sizing:border-box;"></div><div class="t" style="top:494.01px;right:665.3px;text-align:right;">0.05</div>
<div class="a" style="left:417.3px;top:494.3400000000001px;width:40.5px;height:15.740000000000009px;background:#c8e7ee;border-right:1px solid #c6d3e3;border-bottom:1px solid #c6d3e3;box-sizing:border-box;"></div><div class="t" style="top:494.01px;right:624.8px;text-align:right;">-0.96</div>
<div class="a" style="left:457.8px;top:494.3400000000001px;width:40.19999999999999px;height:15.740000000000009px;background:#c8e7ee;border-right:1px solid #c6d3e3;border-bottom:1px solid #c6d3e3;box-sizing:border-box;"></div>
<div class="a" style="left:498px;top:494.3400000000001px;width:40.5px;height:15.740000000000009px;background:#c8e7ee;border-right:1px solid #c6d3e3;border-bottom:1px solid #c6d3e3;box-sizing:border-box;"></div>
<div class="a" style="left:538.5px;top:494.3400000000001px;width:40.299999999999955px;height:15.740000000000009px;background:#c8e7ee;border-right:1px solid #c6d3e3;border-bottom:1px solid #c6d3e3;box-sizing:border-box;"></div>
<div class="a" style="left:578.8px;top:494.3400000000001px;width:45.5px;height:15.740000000000009px;background:#c8e7ee;border-right:1px solid #c6d3e3;border-bottom:1px solid #c6d3e3;box-sizing:border-box;"></div>
<div class="a" style="left:296px;top:510.0800000000001px;width:41px;height:15.739999999999952px;background:#fffbea;border-right:1px solid #e6e4dc;border-bottom:1px solid #e6e4dc;box-sizing:border-box;"></div><div class="t" style="top:509.75px;right:745.6px;text-align:right;color:#5aa83a;">15.125</div>
<div class="a" style="left:337px;top:510.0800000000001px;width:40.19999999999999px;height:15.739999999999952px;background:#fffbea;border-right:1px solid #e6e4dc;border-bottom:1px solid #e6e4dc;box-sizing:border-box;"></div><div class="t" style="top:509.75px;right:705.4px;text-align:right;">-9.31</div>
<div class="a" style="left:377.2px;top:510.0800000000001px;width:40.10000000000002px;height:15.739999999999952px;background:#fffbea;border-right:1px solid #e6e4dc;border-bottom:1px solid #e6e4dc;box-sizing:border-box;"></div><div class="t" style="top:509.75px;right:665.3px;text-align:right;">0.05</div>
<div class="a" style="left:417.3px;top:510.0800000000001px;width:40.5px;height:15.739999999999952px;background:#fffbea;border-right:1px solid #e6e4dc;border-bottom:1px solid #e6e4dc;box-sizing:border-box;"></div><div class="t" style="top:509.75px;right:624.8px;text-align:right;">-0.91</div>
<div class="a" style="left:457.8px;top:510.0800000000001px;width:40.19999999999999px;height:15.739999999999952px;background:#fffbea;border-right:1px solid #e6e4dc;border-bottom:1px solid #e6e4dc;box-sizing:border-box;"></div>
<div class="a" style="left:498px;top:510.0800000000001px;width:40.5px;height:15.739999999999952px;background:#fffbea;border-right:1px solid #e6e4dc;border-bottom:1px solid #e6e4dc;box-sizing:border-box;"></div>
<div class="a" style="left:538.5px;top:510.0800000000001px;width:40.299999999999955px;height:15.739999999999952px;background:#fffbea;border-right:1px solid #e6e4dc;border-bottom:1px solid #e6e4dc;box-sizing:border-box;"></div>
<div class="a" style="left:578.8px;top:510.0800000000001px;width:45.5px;height:15.739999999999952px;background:#fffbea;border-right:1px solid #e6e4dc;border-bottom:1px solid #e6e4dc;box-sizing:border-box;"></div>
<div class="a" style="left:296px;top:525.82px;width:41px;height:15.740000000000009px;background:#c8e7ee;border-right:1px solid #c6d3e3;border-bottom:1px solid #c6d3e3;box-sizing:border-box;"></div><div class="t" style="top:525.49px;right:745.6px;text-align:right;color:#2e9a3c;">13.75</div>
<div class="a" style="left:337px;top:525.82px;width:40.19999999999999px;height:15.740000000000009px;background:#c8e7ee;border-right:1px solid #c6d3e3;border-bottom:1px solid #c6d3e3;box-sizing:border-box;"></div><div class="t" style="top:525.49px;right:705.4px;text-align:right;">-8.46</div>
<div class="a" style="left:377.2px;top:525.82px;width:40.10000000000002px;height:15.740000000000009px;background:#c8e7ee;border-right:1px solid #c6d3e3;border-bottom:1px solid #c6d3e3;box-sizing:border-box;"></div><div class="t" style="top:525.49px;right:665.3px;text-align:right;">0.04</div>
<div class="a" style="left:417.3px;top:525.82px;width:40.5px;height:15.740000000000009px;background:#c8e7ee;border-right:1px solid #c6d3e3;border-bottom:1px solid #c6d3e3;box-sizing:border-box;"></div><div class="t" style="top:525.49px;right:624.8px;text-align:right;">-0.87</div>
<div class="a" style="left:457.8px;top:525.82px;width:40.19999999999999px;height:15.740000000000009px;background:#c8e7ee;border-right:1px solid #c6d3e3;border-bottom:1px solid #c6d3e3;box-sizing:border-box;"></div>
<div class="a" style="left:498px;top:525.82px;width:40.5px;height:15.740000000000009px;background:#c8e7ee;border-right:1px solid #c6d3e3;border-bottom:1px solid #c6d3e3;box-sizing:border-box;"></div>
<div class="a" style="left:538.5px;top:525.82px;width:40.299999999999955px;height:15.740000000000009px;background:#c8e7ee;border-right:1px solid #c6d3e3;border-bottom:1px solid #c6d3e3;box-sizing:border-box;"></div>
<div class="a" style="left:578.8px;top:525.82px;width:45.5px;height:15.740000000000009px;background:#c8e7ee;border-right:1px solid #c6d3e3;border-bottom:1px solid #c6d3e3;box-sizing:border-box;"></div>
<div class="a" style="left:296px;top:541.5600000000001px;width:41px;height:15.740000000000009px;background:#fff;border-right:1px solid #d6dae6;border-bottom:1px solid #d6dae6;box-sizing:border-box;"></div><div class="t" style="top:541.23px;right:745.6px;text-align:right;color:#2e9a3c;">12.50</div>
<div class="a" style="left:337px;top:541.5600000000001px;width:40.19999999999999px;height:15.740000000000009px;background:#fff;border-right:1px solid #d6dae6;border-bottom:1px solid #d6dae6;box-sizing:border-box;"></div><div class="t" style="top:541.23px;right:705.4px;text-align:right;">-7.68</div>
<div class="a" style="left:377.2px;top:541.5600000000001px;width:40.10000000000002px;height:15.740000000000009px;background:#fff;border-right:1px solid #d6dae6;border-bottom:1px solid #d6dae6;box-sizing:border-box;"></div><div class="t" style="top:541.23px;right:665.3px;text-align:right;">0.04</div>
<div class="a" style="left:417.3px;top:541.5600000000001px;width:40.5px;height:15.740000000000009px;background:#fff;border-right:1px solid #d6dae6;border-bottom:1px solid #d6dae6;box-sizing:border-box;"></div><div class="t" style="top:541.23px;right:624.8px;text-align:right;">-0.82</div>
<div class="a" style="left:457.8px;top:541.5600000000001px;width:40.19999999999999px;height:15.740000000000009px;background:#fff;border-right:1px solid #d6dae6;border-bottom:1px solid #d6dae6;box-sizing:border-box;"></div>
<div class="a" style="left:498px;top:541.5600000000001px;width:40.5px;height:15.740000000000009px;background:#fff;border-right:1px solid #d6dae6;border-bottom:1px solid #d6dae6;box-sizing:border-box;"></div>
<div class="a" style="left:538.5px;top:541.5600000000001px;width:40.299999999999955px;height:15.740000000000009px;background:#fff;border-right:1px solid #d6dae6;border-bottom:1px solid #d6dae6;box-sizing:border-box;"></div>
<div class="a" style="left:578.8px;top:541.5600000000001px;width:45.5px;height:15.740000000000009px;background:#fff;border-right:1px solid #d6dae6;border-bottom:1px solid #d6dae6;box-sizing:border-box;"></div>
<div class="a" style="left:296px;top:557.3000000000001px;width:41px;height:15.740000000000009px;background:#fff;border-right:1px solid #d6dae6;border-bottom:1px solid #d6dae6;box-sizing:border-box;"></div><div class="t" style="top:556.97px;right:745.6px;text-align:right;color:#e8202a;">11.25</div>
<div class="a" style="left:337px;top:557.3000000000001px;width:40.19999999999999px;height:15.740000000000009px;background:#fff;border-right:1px solid #d6dae6;border-bottom:1px solid #d6dae6;box-sizing:border-box;"></div><div class="t" style="top:556.97px;right:705.4px;text-align:right;">-6.93</div>
<div class="a" style="left:377.2px;top:557.3000000000001px;width:40.10000000000002px;height:15.740000000000009px;background:#fff;border-right:1px solid #d6dae6;border-bottom:1px solid #d6dae6;box-sizing:border-box;"></div><div class="t" style="top:556.97px;right:665.3px;text-align:right;">0.04</div>
<div class="a" style="left:417.3px;top:557.3000000000001px;width:40.5px;height:15.740000000000009px;background:#fff;border-right:1px solid #d6dae6;border-bottom:1px solid #d6dae6;box-sizing:border-box;"></div><div class="t" style="top:556.97px;right:624.8px;text-align:right;">-0.78</div>
<div class="a" style="left:457.8px;top:557.3000000000001px;width:40.19999999999999px;height:15.740000000000009px;background:#fff;border-right:1px solid #d6dae6;border-bottom:1px solid #d6dae6;box-sizing:border-box;"></div>
<div class="a" style="left:498px;top:557.3000000000001px;width:40.5px;height:15.740000000000009px;background:#fff;border-right:1px solid #d6dae6;border-bottom:1px solid #d6dae6;box-sizing:border-box;"></div>
<div class="a" style="left:538.5px;top:557.3000000000001px;width:40.299999999999955px;height:15.740000000000009px;background:#fff;border-right:1px solid #d6dae6;border-bottom:1px solid #d6dae6;box-sizing:border-box;"></div>
<div class="a" style="left:578.8px;top:557.3000000000001px;width:45.5px;height:15.740000000000009px;background:#fff;border-right:1px solid #d6dae6;border-bottom:1px solid #d6dae6;box-sizing:border-box;"></div>
<div class="a" style="left:296px;top:573.0400000000001px;width:41px;height:15.740000000000009px;background:#fff;border-right:1px solid #d6dae6;border-bottom:1px solid #d6dae6;box-sizing:border-box;"></div><div class="t" style="top:572.71px;right:745.6px;text-align:right;color:#2e9a3c;">10.50</div>
<div class="a" style="left:337px;top:573.0400000000001px;width:40.19999999999999px;height:15.740000000000009px;background:#fff;border-right:1px solid #d6dae6;border-bottom:1px solid #d6dae6;box-sizing:border-box;"></div><div class="t" style="top:572.71px;right:705.4px;text-align:right;">-6.40</div>
<div class="a" style="left:377.2px;top:573.0400000000001px;width:40.10000000000002px;height:15.740000000000009px;background:#fff;border-right:1px solid #d6dae6;border-bottom:1px solid #d6dae6;box-sizing:border-box;"></div><div class="t" style="top:572.71px;right:665.3px;text-align:right;">0.03</div>
<div class="a" style="left:417.3px;top:573.0400000000001px;width:40.5px;height:15.740000000000009px;background:#fff;border-right:1px solid #d6dae6;border-bottom:1px solid #d6dae6;box-sizing:border-box;"></div><div class="t" style="top:572.71px;right:624.8px;text-align:right;">-0.75</div>
<div class="a" style="left:457.8px;top:573.0400000000001px;width:40.19999999999999px;height:15.740000000000009px;background:#fff;border-right:1px solid #d6dae6;border-bottom:1px solid #d6dae6;box-sizing:border-box;"></div>
<div class="a" style="left:498px;top:573.0400000000001px;width:40.5px;height:15.740000000000009px;background:#fff;border-right:1px solid #d6dae6;border-bottom:1px solid #d6dae6;box-sizing:border-box;"></div>
<div class="a" style="left:538.5px;top:573.0400000000001px;width:40.299999999999955px;height:15.740000000000009px;background:#fff;border-right:1px solid #d6dae6;border-bottom:1px solid #d6dae6;box-sizing:border-box;"></div>
<div class="a" style="left:578.8px;top:573.0400000000001px;width:45.5px;height:15.740000000000009px;background:#fff;border-right:1px solid #d6dae6;border-bottom:1px solid #d6dae6;box-sizing:border-box;"></div></div>
<div class="a" style="left:243.3px;top:512.0799999999999px;width:1px;height:10.5px;background:#222;"></div>
<div class="a" style="left:624px;top:303.5px;width:14px;height:17.3px;background:#f5f7fb;"></div>
<div class="a" style="left:624px;top:320.8px;width:14.5px;height:266.40000000000003px;background:#dde3ef;"></div><svg class="a" style="left:627.5px;top:325.8px" width="8" height="5" viewBox="0 0 8 5"><path d="M1.3 4L4 1.3 6.7 4z" fill="#666e83"/></svg><svg class="a" style="left:627.5px;top:578.2px" width="8" height="5" viewBox="0 0 8 5"><path d="M1.3 1L4 3.7 6.7 1z" fill="#666e83"/></svg><div class="a" style="left:627px;top:432px;width:8.5px;height:19px;background:#8a93a8;"></div>
<svg class="a" style="left:259px;top:591px" width="13" height="5" viewBox="0 0 13 5"><path d="M.5 .5l3 3.5M.5 4l3-3.5M3.5 .5l3 3.5M3.5 4l3-3.5M6.5 .5l3 3.5M6.5 4l3-3.5M9.5 .5l3 3.5M9.5 4l3-3.5" stroke="#aeb6c9" stroke-width=".7" fill="none"/></svg>
<svg class="a" style="left:642px;top:395.5px" width="5" height="13" viewBox="0 0 5 13"><path d="M.5 .5l3.5 3M4 .5L.5 3.5M.5 3.5l3.5 3M4 3.5L.5 6.5M.5 6.5l3.5 3M4 6.5L.5 9.5M.5 9.5l3.5 3M4 9.5L.5 12.5" stroke="#aeb6c9" stroke-width=".7" fill="none"/></svg>
<div class="a" style="left:-5px;top:599.5px;width:101px;height:16px;background:#fff;border:1px solid #c3cbdc;box-sizing:border-box;"></div>
<div class="t" style="top:599.7px;left:-0.5px;letter-spacing:0px;transform:scaleX(0.9412);transform-origin:left center;">ned</div>
<svg class="a" style="left:86px;top:605.5px" width="5" height="3.4" viewBox="0 0 6 4"><path d="M.4 .5h5.2L3 3.5z" fill="#555b6b"/></svg>
<div class="a" style="left:104.5px;top:599.5px;width:67.5px;height:16px;background:#fff;border:1px solid #c3cbdc;box-sizing:border-box;"></div>
<div class="t" style="top:599.7px;left:107.5px;letter-spacing:0px;transform:scaleX(0.9255);transform-origin:left center;">Auto</div>
<svg class="a" style="left:162px;top:605.5px" width="5" height="3.4" viewBox="0 0 6 4"><path d="M.4 .5h5.2L3 3.5z" fill="#555b6b"/></svg>
<div class="a" style="left:520.7px;top:602.8px;width:8.6px;height:8.6px;background:#fff;border:1px solid #aab2c6;box-sizing:border-box;"></div>
<div class="t" style="top:599.2px;left:533.3px;letter-spacing:0px;transform:scaleX(0.9991);transform-origin:left center;">Ignore Today's Trades</div>
<div class="a" style="left:-20px;top:618.3px;width:658.5px;height:50px;background:#fff;border:1px solid #c6cee0;box-sizing:border-box;"></div>
<div class="a" style="left:-20px;top:619.3px;width:25.5px;height:17.200000000000045px;background:#f5f7fb;border-right:1px solid #dfe4ee;border-bottom:1px solid #dfe4ee;box-sizing:border-box;"></div>
<div class="a" style="left:5.5px;top:619.3px;width:57.0px;height:17.200000000000045px;background:#f5f7fb;border-right:1px solid #dfe4ee;border-bottom:1px solid #dfe4ee;box-sizing:border-box;"></div><div class="t" style="top:618.8px;left:-4.4px;width:77.0px;text-align:center;transform:scaleX(.94);">Cost</div>
<div class="a" style="left:62.5px;top:619.3px;width:57.0px;height:17.200000000000045px;background:#f5f7fb;border-right:1px solid #dfe4ee;border-bottom:1px solid #dfe4ee;box-sizing:border-box;"></div><div class="t" style="top:618.8px;left:52.6px;width:77.0px;text-align:center;transform:scaleX(.94);">Curr Cost</div>
<div class="a" style="left:119.5px;top:619.3px;width:57.0px;height:17.200000000000045px;background:#f5f7fb;border-right:1px solid #dfe4ee;border-bottom:1px solid #dfe4ee;box-sizing:border-box;"></div><div class="t" style="top:618.8px;left:109.6px;width:77.0px;text-align:center;transform:scaleX(.94);">Commissi...</div>
<div class="a" style="left:176.5px;top:619.3px;width:56.5px;height:17.200000000000045px;background:#f5f7fb;border-right:1px solid #dfe4ee;border-bottom:1px solid #dfe4ee;box-sizing:border-box;"></div><div class="t" style="top:618.8px;left:166.6px;width:76.5px;text-align:center;transform:scaleX(.94);">PnL</div>
<div class="a" style="left:233px;top:619.3px;width:56.5px;height:17.200000000000045px;background:#f5f7fb;border-right:1px solid #dfe4ee;border-bottom:1px solid #dfe4ee;box-sizing:border-box;"></div><div class="t" style="top:618.8px;left:223.1px;width:76.5px;text-align:center;transform:scaleX(.94);">PnL%</div>
<div class="a" style="left:289.5px;top:619.3px;width:57.0px;height:17.200000000000045px;background:#f5f7fb;border-right:1px solid #dfe4ee;border-bottom:1px solid #dfe4ee;box-sizing:border-box;"></div><div class="t" style="top:618.8px;left:279.6px;width:77.0px;text-align:center;transform:scaleX(.94);">Delta</div>
<div class="a" style="left:346.5px;top:619.3px;width:57.0px;height:17.200000000000045px;background:#f5f7fb;border-right:1px solid #dfe4ee;border-bottom:1px solid #dfe4ee;box-sizing:border-box;"></div><div class="t" style="top:618.8px;left:336.6px;width:77.0px;text-align:center;transform:scaleX(.94);">Gamma</div>
<div class="a" style="left:403.5px;top:619.3px;width:56.5px;height:17.200000000000045px;background:#f5f7fb;border-right:1px solid #dfe4ee;border-bottom:1px solid #dfe4ee;box-sizing:border-box;"></div><div class="t" style="top:618.8px;left:393.6px;width:76.5px;text-align:center;transform:scaleX(.94);">Theta</div>
<div class="a" style="left:460px;top:619.3px;width:56.5px;height:17.200000000000045px;background:#f5f7fb;border-right:1px solid #dfe4ee;border-bottom:1px solid #dfe4ee;box-sizing:border-box;"></div><div class="t" style="top:618.8px;left:450.1px;width:76.5px;text-align:center;transform:scaleX(.94);">Vega</div>
<div class="a" style="left:516.5px;top:619.3px;width:57.0px;height:17.200000000000045px;background:#f5f7fb;border-right:1px solid #dfe4ee;border-bottom:1px solid #dfe4ee;box-sizing:border-box;"></div><div class="t" style="top:618.8px;left:506.6px;width:77.0px;text-align:center;transform:scaleX(.94);">T/D</div>
<div class="a" style="left:573.5px;top:619.3px;width:64.79999999999995px;height:17.200000000000045px;background:#f5f7fb;border-right:1px solid #dfe4ee;border-bottom:1px solid #dfe4ee;box-sizing:border-box;"></div><div class="t" style="top:618.8px;left:563.6px;width:84.79999999999995px;text-align:center;transform:scaleX(.94);">Plot</div>
<div class="a" style="left:-20px;top:636.5px;width:25.5px;height:16.0px;background:#fff;border-right:1px solid #d3d9e6;border-bottom:1px solid #d3d9e6;box-sizing:border-box;"></div><div class="t" style="top:636.3px;right:1077.1px;text-align:right;">0</div>
<div class="a" style="left:5.5px;top:636.5px;width:57.0px;height:16.0px;background:#fff;border-right:1px solid #d3d9e6;border-bottom:1px solid #d3d9e6;box-sizing:border-box;"></div><div class="t" style="top:636.3px;right:1020.1px;text-align:right;">-2,165.90</div>
<div class="a" style="left:62.5px;top:636.5px;width:57.0px;height:16.0px;background:#fff;border-right:1px solid #d3d9e6;border-bottom:1px solid #d3d9e6;box-sizing:border-box;"></div><div class="t" style="top:636.3px;right:963.1px;text-align:right;">2,125.00</div>
<div class="a" style="left:119.5px;top:636.5px;width:57.0px;height:16.0px;background:#fff;border-right:1px solid #d3d9e6;border-bottom:1px solid #d3d9e6;box-sizing:border-box;"></div><div class="t" style="top:636.3px;right:906.1px;text-align:right;">28.90</div>
<div class="a" style="left:176.5px;top:636.5px;width:56.5px;height:16.0px;background:#fff;border-right:1px solid #d3d9e6;border-bottom:1px solid #d3d9e6;box-sizing:border-box;"></div><div class="t" style="top:636.3px;right:849.6px;text-align:right;color:#e8202a;">-40.90</div>
<div class="a" style="left:233px;top:636.5px;width:56.5px;height:16.0px;background:#fff;border-right:1px solid #d3d9e6;border-bottom:1px solid #d3d9e6;box-sizing:border-box;"></div><div class="t" style="top:636.3px;right:793.1px;text-align:right;color:#e8202a;">-0.20%</div>
<div class="a" style="left:289.5px;top:636.5px;width:57.0px;height:16.0px;background:#fff;border-right:1px solid #d3d9e6;border-bottom:1px solid #d3d9e6;box-sizing:border-box;"></div><div class="t" style="top:636.3px;right:736.1px;text-align:right;">5.10</div>
<div class="a" style="left:346.5px;top:636.5px;width:57.0px;height:16.0px;background:#fff;border-right:1px solid #d3d9e6;border-bottom:1px solid #d3d9e6;box-sizing:border-box;"></div><div class="t" style="top:636.3px;right:679.1px;text-align:right;">-0.07</div>
<div class="a" style="left:403.5px;top:636.5px;width:56.5px;height:16.0px;background:#fff;border-right:1px solid #d3d9e6;border-bottom:1px solid #d3d9e6;box-sizing:border-box;"></div><div class="t" style="top:636.3px;right:622.6px;text-align:right;">74.24</div>
<div class="a" style="left:460px;top:636.5px;width:56.5px;height:16.0px;background:#fff;border-right:1px solid #d3d9e6;border-bottom:1px solid #d3d9e6;box-sizing:border-box;"></div><div class="t" style="top:636.3px;right:566.1px;text-align:right;">279.08</div>
<div class="a" style="left:516.5px;top:636.5px;width:57.0px;height:16.0px;background:#fff;border-right:1px solid #d3d9e6;border-bottom:1px solid #d3d9e6;box-sizing:border-box;"></div><div class="t" style="top:636.3px;right:509.1px;text-align:right;">14.6</div>
<div class="a" style="left:573.5px;top:636.5px;width:64.79999999999995px;height:16.0px;background:#fff;border-right:1px solid #d3d9e6;border-bottom:1px solid #d3d9e6;box-sizing:border-box;"></div>
<div class="a" style="left:-20px;top:652.5px;width:25.5px;height:16.0px;background:#fff;border-right:1px solid #d3d9e6;border-bottom:1px solid #d3d9e6;box-sizing:border-box;"></div><div class="t" style="top:652.3px;right:1077.1px;text-align:right;">2</div>
<div class="a" style="left:5.5px;top:652.5px;width:57.0px;height:16.0px;background:#fff;border-right:1px solid #d3d9e6;border-bottom:1px solid #d3d9e6;box-sizing:border-box;"></div><div class="t" style="top:652.3px;right:1020.1px;text-align:right;">-2,455.10</div>
<div class="a" style="left:62.5px;top:652.5px;width:57.0px;height:16.0px;background:#fff;border-right:1px solid #d3d9e6;border-bottom:1px solid #d3d9e6;box-sizing:border-box;"></div><div class="t" style="top:652.3px;right:963.1px;text-align:right;">2,412.50</div>
<div class="a" style="left:119.5px;top:652.5px;width:57.0px;height:16.0px;background:#fff;border-right:1px solid #d3d9e6;border-bottom:1px solid #d3d9e6;box-sizing:border-box;"></div><div class="t" style="top:652.3px;right:906.1px;text-align:right;">30.60</div>
<div class="a" style="left:176.5px;top:652.5px;width:56.5px;height:16.0px;background:#fff;border-right:1px solid #d3d9e6;border-bottom:1px solid #d3d9e6;box-sizing:border-box;"></div><div class="t" style="top:652.3px;right:849.6px;text-align:right;color:#e8202a;">-42.60</div>
<div class="a" style="left:233px;top:652.5px;width:56.5px;height:16.0px;background:#fff;border-right:1px solid #d3d9e6;border-bottom:1px solid #d3d9e6;box-sizing:border-box;"></div><div class="t" style="top:652.3px;right:793.1px;text-align:right;color:#e8202a;">-0.15%</div>
<div class="a" style="left:289.5px;top:652.5px;width:57.0px;height:16.0px;background:#fff;border-right:1px solid #d3d9e6;border-bottom:1px solid #d3d9e6;box-sizing:border-box;"></div><div class="t" style="top:652.3px;right:736.1px;text-align:right;">3.31</div>
<div class="a" style="left:346.5px;top:652.5px;width:57.0px;height:16.0px;background:#fff;border-right:1px solid #d3d9e6;border-bottom:1px solid #d3d9e6;box-sizing:border-box;"></div><div class="t" style="top:652.3px;right:679.1px;text-align:right;">-0.06</div>
<div class="a" style="left:403.5px;top:652.5px;width:56.5px;height:16.0px;background:#fff;border-right:1px solid #d3d9e6;border-bottom:1px solid #d3d9e6;box-sizing:border-box;"></div><div class="t" style="top:652.3px;right:622.6px;text-align:right;">66.09</div>
<div class="a" style="left:460px;top:652.5px;width:56.5px;height:16.0px;background:#fff;border-right:1px solid #d3d9e6;border-bottom:1px solid #d3d9e6;box-sizing:border-box;"></div><div class="t" style="top:652.3px;right:566.1px;text-align:right;">314.63</div>
<div class="a" style="left:516.5px;top:652.5px;width:57.0px;height:16.0px;background:#fff;border-right:1px solid #d3d9e6;border-bottom:1px solid #d3d9e6;box-sizing:border-box;"></div><div class="t" style="top:652.3px;right:509.1px;text-align:right;">20</div>
<div class="a" style="left:573.5px;top:652.5px;width:64.79999999999995px;height:16.0px;background:#fff;border-right:1px solid #d3d9e6;border-bottom:1px solid #d3d9e6;box-sizing:border-box;"></div>
<svg class="a" style="left:601.5px;top:639.6px" width="10" height="10" viewBox="0 0 10 10"><rect x=".5" y=".5" width="8.6" height="8.6" fill="#fff" stroke="#aab2c6" stroke-width=".9"/><path d="M2.2 4.8l2 2.2 3.4-4.6" fill="none" stroke="#6a7080" stroke-width="1"/></svg>
<svg class="a" style="left:601.5px;top:655.5px" width="10" height="10" viewBox="0 0 10 10"><rect x=".5" y=".5" width="8.6" height="8.6" fill="#fff" stroke="#aab2c6" stroke-width=".9"/><path d="M2.2 4.8l2 2.2 3.4-4.6" fill="none" stroke="#6a7080" stroke-width="1"/></svg>
<div class="a" style="left:0px;top:667.9px;width:1080px;height:3.2px;background:#b0bace;"></div>
<div class="a" style="left:0px;top:671px;width:1080px;height:5px;background:#293955;"></div>
<div class="a" style="left:649.5px;top:137px;width:431px;height:43.5px;background:#dbe0ed;border:1px solid #bfc8db;box-sizing:border-box;border-bottom:none;border-right:none;"></div>
<div class="a" style="left:649.5px;top:137px;width:64.5px;height:22px;background:#dbe0ed;border:1px solid #b4bed4;box-sizing:border-box;border-bottom:none;"></div>
<div class="t" style="top:139.2px;left:581.55px;width:200px;text-align:center;letter-spacing:0px;transform:scaleX(0.9038);transform-origin:center center;">Risk Chart</div>
<div class="a" style="left:713px;top:137px;width:68.5px;height:21.5px;background:#ced5e6;border:1px solid #b0bad1;box-sizing:border-box;"></div>
<div class="t" style="top:139.2px;left:647.05px;width:200px;text-align:center;letter-spacing:0px;transform:scaleX(0.9045);transform-origin:center center;">Price Chart</div>
<div class="a" style="left:780.5px;top:137px;width:106.0px;height:21.5px;background:#ced5e6;border:1px solid #b0bad1;box-sizing:border-box;"></div>
<div class="t" style="top:139.2px;left:733.3px;width:200px;text-align:center;letter-spacing:0px;transform:scaleX(0.9484);transform-origin:center center;">Movement Analysis</div>
<div class="a" style="left:885.5px;top:137px;width:55.0px;height:21.5px;background:#ced5e6;border:1px solid #b0bad1;box-sizing:border-box;"></div>
<div class="t" style="top:139.2px;left:812.8px;width:200px;text-align:center;letter-spacing:0px;transform:scaleX(0.8954);transform-origin:center center;">Volatility</div>
<div class="a" style="left:939.5px;top:137px;width:134.0px;height:21.5px;background:#ced5e6;border:1px solid #b0bad1;box-sizing:border-box;"></div>
<div class="t" style="top:139.2px;left:906.3px;width:200px;text-align:center;letter-spacing:0px;transform:scaleX(0.9375);transform-origin:center center;">Statistics &amp; Fundamentals</div>
<div class="a" style="left:1072.5px;top:137px;width:18.5px;height:21.5px;background:#ced5e6;border:1px solid #b0bad1;box-sizing:border-box;"></div>
<div class="t" style="top:161.5px;left:654.5px;letter-spacing:0px;transform:scaleX(0.9604);transform-origin:left center;">Vol Adjust</div>
<div class="a" style="left:702.8px;top:161.5px;width:45.2px;height:16.5px;background:#fff;border:1px solid #c3cbdc;box-sizing:border-box;"></div>
<div class="t" style="top:161.5px;right:346.7px;text-align:right;">0</div>
<svg class="a" style="left:738px;top:164px" width="7" height="12" viewBox="0 0 7 12"><path d="M.8 4L3.5 1.2 6.2 4z" fill="#4a4f5c"/><path d="M.8 8L3.5 10.8 6.2 8z" fill="#4a4f5c"/></svg>
<div class="t" style="top:161.5px;right:47px;text-align:right;letter-spacing:0px;transform:scaleX(0.91);transform-origin:right center;">Projection</div>
<div class="a" style="left:1037.5px;top:161.5px;width:50px;height:16.5px;background:#fff;border:1px solid #c3cbdc;box-sizing:border-box;"></div>
<div class="t" style="top:161.5px;left:1040px;letter-spacing:-0.2px;">07/01/20</div>
<div class="a" style="left:649.5px;top:180.3px;width:431px;height:467px;background:#fff;border-left:1px solid #c9d0e0;box-sizing:border-box;"></div>
<div class="a" style="left:649.5px;top:646.8px;width:431px;height:21.4px;background:#293955;"></div>
<div class="t" style="top:650px;left:1045px;color:#fff;font-size:11.5px;letter-spacing:0px;">480</div>
<svg class="a" style="left:0;top:0" width="1080" height="675" viewBox="0 0 1080 675">
<defs><clipPath id="pc"><rect x="697" y="195.4" width="383" height="273.79999999999995"/></clipPath></defs>
<rect x="853.8" y="196.4" width="190.5" height="271.79999999999995" fill="#92cddc"/>
<rect x="901.3" y="196.4" width="95.5" height="271.79999999999995" fill="#4f81bd"/>
<rect x="901.3" y="196.4" width="4.2" height="271.79999999999995" fill="#4474b4"/>
<path d="M697 196.4H1080" stroke="#000" stroke-opacity=".13" stroke-width="1"/>
<path d="M853.8 196.4H1044.3" stroke="#fff" stroke-opacity=".55" stroke-width="1"/>
<path d="M697 221.1H1080" stroke="#000" stroke-opacity=".13" stroke-width="1"/>
<path d="M853.8 221.1H1044.3" stroke="#fff" stroke-opacity=".55" stroke-width="1"/>
<path d="M697 245.8H1080" stroke="#000" stroke-opacity=".13" stroke-width="1"/>
<path d="M853.8 245.8H1044.3" stroke="#fff" stroke-opacity=".55" stroke-width="1"/>
<path d="M697 270.5H1080" stroke="#000" stroke-opacity=".13" stroke-width="1"/>
<path d="M853.8 270.5H1044.3" stroke="#fff" stroke-opacity=".55" stroke-width="1"/>
<path d="M697 295.2H1080" stroke="#000" stroke-opacity=".13" stroke-width="1"/>
<path d="M853.8 295.2H1044.3" stroke="#fff" stroke-opacity=".55" stroke-width="1"/>
<path d="M697 319.9H1080" stroke="#000" stroke-opacity=".13" stroke-width="1"/>
<path d="M853.8 319.9H1044.3" stroke="#fff" stroke-opacity=".55" stroke-width="1"/>
<path d="M697 344.6H1080" stroke="#000" stroke-opacity=".13" stroke-width="1"/>
<path d="M853.8 344.6H1044.3" stroke="#fff" stroke-opacity=".55" stroke-width="1"/>
<path d="M697 369.3H1080" stroke="#000" stroke-opacity=".13" stroke-width="1"/>
<path d="M853.8 369.3H1044.3" stroke="#fff" stroke-opacity=".55" stroke-width="1"/>
<path d="M697 394.0H1080" stroke="#000" stroke-opacity=".13" stroke-width="1"/>
<path d="M853.8 394.0H1044.3" stroke="#fff" stroke-opacity=".55" stroke-width="1"/>
<path d="M697 418.7H1080" stroke="#000" stroke-opacity=".13" stroke-width="1"/>
<path d="M853.8 418.7H1044.3" stroke="#fff" stroke-opacity=".55" stroke-width="1"/>
<path d="M697 443.4H1080" stroke="#000" stroke-opacity=".13" stroke-width="1"/>
<path d="M853.8 443.4H1044.3" stroke="#fff" stroke-opacity=".55" stroke-width="1"/>
<path d="M697 468.1H1080" stroke="#000" stroke-opacity=".13" stroke-width="1"/>
<path d="M853.8 468.1H1044.3" stroke="#fff" stroke-opacity=".55" stroke-width="1"/>
<path d="M725.5 193.4V196.4M725.5 468.2V470.7" stroke="#000" stroke-opacity=".16" stroke-width="1"/>
<path d="M725.5 196.4V468.2" stroke="#000" stroke-opacity=".13" stroke-width="1"/>
<path d="M785.8 193.4V196.4M785.8 468.2V470.7" stroke="#000" stroke-opacity=".16" stroke-width="1"/>
<path d="M785.8 196.4V468.2" stroke="#000" stroke-opacity=".13" stroke-width="1"/>
<path d="M845.5 193.4V196.4M845.5 468.2V470.7" stroke="#000" stroke-opacity=".16" stroke-width="1"/>
<path d="M845.5 196.4V468.2" stroke="#000" stroke-opacity=".13" stroke-width="1"/>
<path d="M906.0 193.4V196.4M906.0 468.2V470.7" stroke="#000" stroke-opacity=".16" stroke-width="1"/>
<path d="M906.0 196.4V468.2" stroke="#000" stroke-opacity=".13" stroke-width="1"/>
<path d="M906.0 196.4V468.2" stroke="#fff" stroke-opacity=".6" stroke-width="1"/>
<path d="M966.2 193.4V196.4M966.2 468.2V470.7" stroke="#000" stroke-opacity=".16" stroke-width="1"/>
<path d="M966.2 196.4V468.2" stroke="#000" stroke-opacity=".13" stroke-width="1"/>
<path d="M966.2 196.4V468.2" stroke="#fff" stroke-opacity=".6" stroke-width="1"/>
<path d="M1027.0 193.4V196.4M1027.0 468.2V470.7" stroke="#000" stroke-opacity=".16" stroke-width="1"/>
<path d="M1027.0 196.4V468.2" stroke="#000" stroke-opacity=".13" stroke-width="1"/>
<path d="M1027.0 196.4V468.2" stroke="#fff" stroke-opacity=".6" stroke-width="1"/>
<path d="M697 196.4V468.2" stroke="#000" stroke-opacity=".13" stroke-width="1"/>
<text transform="translate(863.2,230.5) rotate(-90)" font-family="Liberation Sans, sans-serif" font-size="8.8" fill="#5f9fc4">5907.12</text>
<text transform="translate(912,230.5) rotate(-90)" font-family="Liberation Sans, sans-serif" font-size="8.8" fill="#8fb2e2">5946.44</text>
<text transform="translate(995,230.5) rotate(-90)" font-family="Liberation Sans, sans-serif" font-size="8.8" fill="#86aada">6025.06</text>
<text transform="translate(1043.7,230.5) rotate(-90)" font-family="Liberation Sans, sans-serif" font-size="8.8" fill="#4f94cf">6064.38</text>
<text x="691.5" y="200.0" font-family="Liberation Sans, sans-serif" font-size="8.8" fill="#222" text-anchor="end">34%</text>
<text x="691.5" y="224.7" font-family="Liberation Sans, sans-serif" font-size="8.8" fill="#222" text-anchor="end">29%</text>
<text x="691.5" y="249.4" font-family="Liberation Sans, sans-serif" font-size="8.8" fill="#222" text-anchor="end">24%</text>
<text x="691.5" y="274.1" font-family="Liberation Sans, sans-serif" font-size="8.8" fill="#222" text-anchor="end">19%</text>
<text x="691.5" y="298.8" font-family="Liberation Sans, sans-serif" font-size="8.8" fill="#222" text-anchor="end">14%</text>
<text x="691.5" y="323.5" font-family="Liberation Sans, sans-serif" font-size="8.8" fill="#222" text-anchor="end">10%</text>
<text x="691.5" y="348.2" font-family="Liberation Sans, sans-serif" font-size="8.8" fill="#222" text-anchor="end">5%</text>
<rect x="655.5" y="363.8" width="38" height="11.2" fill="#c80000"/>
<text x="691.5" y="372.9" font-family="Liberation Sans, sans-serif" font-size="8.8" fill="#fff" text-anchor="end">0%</text>
<text x="691.5" y="397.6" font-family="Liberation Sans, sans-serif" font-size="8.8" fill="#222" text-anchor="end">-5%</text>
<text x="691.5" y="422.3" font-family="Liberation Sans, sans-serif" font-size="8.8" fill="#222" text-anchor="end">-10%</text>
<text x="691.5" y="447.0" font-family="Liberation Sans, sans-serif" font-size="8.8" fill="#222" text-anchor="end">-14%</text>
<text x="691.5" y="471.7" font-family="Liberation Sans, sans-serif" font-size="8.8" fill="#222" text-anchor="end">-19%</text>
<text x="725.5" y="191.5" font-family="Liberation Sans, sans-serif" font-size="8.8" fill="#222" text-anchor="middle">-3.1%</text>
<text x="785.8" y="191.5" font-family="Liberation Sans, sans-serif" font-size="8.8" fill="#222" text-anchor="middle">-2.3%</text>
<text x="845.5" y="191.5" font-family="Liberation Sans, sans-serif" font-size="8.8" fill="#222" text-anchor="middle">-1.4%</text>
<text x="906.0" y="191.5" font-family="Liberation Sans, sans-serif" font-size="8.8" fill="#222" text-anchor="middle">-0.6%</text>
<text x="1027.0" y="191.5" font-family="Liberation Sans, sans-serif" font-size="8.8" fill="#222" text-anchor="middle">1.1%</text>
<text x="958.5" y="191.5" font-family="Liberation Sans, sans-serif" font-size="8.8" fill="#222" text-anchor="middle">0</text>
<text x="1078.5" y="191.5" font-family="Liberation Sans, sans-serif" font-size="8.8" fill="#222" text-anchor="middle">1</text>
<rect x="960.5" y="180.8" width="25.2" height="11" fill="#f4f7fc" fill-opacity=".9" stroke="#5a6474" stroke-width=".9"/>
<text x="973.2" y="190" font-family="Liberation Sans, sans-serif" font-size="8.8" fill="#222" text-anchor="middle">0.3%</text>
<text x="725.5" y="481.3" font-family="Liberation Sans, sans-serif" font-size="8.8" fill="#222" text-anchor="middle">5800</text>
<text x="785.8" y="481.3" font-family="Liberation Sans, sans-serif" font-size="8.8" fill="#222" text-anchor="middle">5850</text>
<text x="845.5" y="481.3" font-family="Liberation Sans, sans-serif" font-size="8.8" fill="#222" text-anchor="middle">5900</text>
<text x="906.0" y="481.3" font-family="Liberation Sans, sans-serif" font-size="8.8" fill="#222" text-anchor="middle">5950</text>
<text x="1027.0" y="481.3" font-family="Liberation Sans, sans-serif" font-size="8.8" fill="#222" text-anchor="middle">6050</text>
<text x="1087" y="481.3" font-family="Liberation Sans, sans-serif" font-size="8.8" fill="#222" text-anchor="middle">6100</text>
<g clip-path="url(#pc)">
<path d="M697 369H1080" stroke="#454545" stroke-width="1"/>
<path d="M853.8 369H1044.3" stroke="#2c3a52" stroke-width="1"/>
<path d="M696.0 448.0C701.7 445.6 718.5 438.3 730.0 433.5C741.5 428.7 759.2 421.7 765.0 419.3" fill="none" stroke="#f59090" stroke-width="1"/>
<path d="M765.0 419.3C772.9 416.4 801.7 405.7 812.5 402.0C823.3 398.3 820.4 399.5 830.0 397.0C839.6 394.5 856.7 389.9 870.0 387.0C883.3 384.1 892.9 382.2 910.0 379.5C927.1 376.8 953.3 372.7 972.5 370.5C991.7 368.3 1007.1 367.3 1025.0 366.3C1042.9 365.3 1070.8 364.8 1080.0 364.5" fill="none" stroke="#8ab0f4" stroke-width="1"/>
<path d="M696.0 431.3C701.7 429.2 724.3 420.8 730.0 418.7" fill="none" stroke="#f59090" stroke-width="1"/>
<path d="M730.0 418.7C740.7 415.6 777.3 404.7 794.0 400.0C810.7 395.3 817.3 393.6 830.0 390.7C842.7 387.8 856.7 384.9 870.0 382.5C883.3 380.1 892.9 378.1 910.0 376.0C927.1 373.9 957.5 371.1 972.5 370.0C987.5 368.9 992.1 369.4 1000.0 369.2C1007.9 369.0 1016.7 369.0 1020.0 369.0" fill="none" stroke="#5ccf5c" stroke-width="1"/>
<path d="M1018 369H1080" stroke="#2c9a2c" stroke-width="1.5"/>
<path d="M696.0 409.3C702.2 406.6 722.0 397.9 733.0 393.0C744.0 388.1 752.3 384.0 762.0 380.0C771.7 376.0 783.0 372.0 791.0 369.0C799.0 366.0 799.7 365.0 810.0 361.8C820.3 358.6 840.5 352.9 853.0 350.0C865.5 347.1 873.8 345.9 885.0 344.5C896.2 343.1 906.5 342.2 920.0 341.5C933.5 340.8 948.5 340.1 966.0 340.5C983.5 340.9 1006.0 342.4 1025.0 344.0C1044.0 345.6 1070.8 349.0 1080.0 350.0" fill="none" stroke="#f26b6b" stroke-width="1"/>
<path d="M696.0 423.7C702.7 420.1 722.3 409.3 736.0 402.0C749.7 394.7 766.7 385.5 778.0 380.0C789.3 374.5 795.3 372.4 804.0 369.0C812.7 365.6 820.7 362.7 830.0 359.5C839.3 356.3 850.8 352.5 860.0 350.0C869.2 347.5 875.0 346.3 885.0 344.5C895.0 342.7 905.5 340.4 920.0 339.0C934.5 337.6 954.5 336.1 972.0 336.0C989.5 335.9 1007.0 337.4 1025.0 338.6C1043.0 339.9 1070.8 342.7 1080.0 343.5" fill="none" stroke="#f26b6b" stroke-width="1"/>
<path d="M697.0 409.6C703.0 402.8 717.5 387.3 733.2 369.0C748.9 350.7 772.5 323.2 791.2 300.0C809.9 276.8 836.5 241.2 845.5 229.5C853.1 234.6 877.2 251.3 891.0 260.0C904.8 268.7 915.5 274.7 928.0 281.5C940.5 288.3 949.8 293.1 966.0 301.0C982.2 308.9 1006.0 321.0 1025.0 329.0C1044.0 337.0 1070.8 345.7 1080.0 349.0" fill="none" stroke="#148a14" stroke-width="1.45" stroke-linejoin="miter"/>
<path d="M697.0 401.9C701.9 396.4 711.5 386.0 726.4 369.0C741.3 352.0 766.4 324.4 786.3 300.0C806.1 275.6 835.6 235.4 845.5 222.5C855.1 228.8 888.2 250.8 903.0 260.0C917.8 269.2 923.5 272.2 934.0 278.0C944.5 283.8 950.8 287.7 966.0 295.0C981.2 302.3 1006.0 314.1 1025.0 322.0C1044.0 329.9 1070.8 339.1 1080.0 342.5" fill="none" stroke="#4a44c8" stroke-width="1.45" stroke-linejoin="miter"/>
<path d="M951.8 368L1020 362.4L1020 369L951.8 375z" fill="#dcae90" fill-opacity=".6"/>
<circle cx="972.5" cy="370" r="2.9" fill="#e80000" stroke="#1a1a1a" stroke-width=".9"/>
<path d="M733.6 198V468" stroke="#a030b0" stroke-width="1" stroke-dasharray="3.2 3"/>
</g>
<text transform="translate(733,465) rotate(-90)" font-family="Liberation Sans, sans-serif" font-size="8.8" fill="#b070c8" fill-opacity=".8">5807.27</text>
<text x="928" y="460" font-family="Liberation Sans, sans-serif" font-size="8.8" fill="#8a2fa0">54.1%</text>
<rect x="701.8" y="200.8" width="137" height="104.2" rx="4" fill="#e9f0fb" fill-opacity=".78" stroke="#8aa0bc" stroke-width="1"/>
<rect x="708" y="207.1" width="2.6" height="10.6" fill="#b7eeb0"/>
<text x="711" y="215.8" font-family="Liberation Sans, sans-serif" font-size="9.1" fill="#6e6e6e">4,270.79 Realized PnL</text>
<rect x="708" y="218.7" width="2.6" height="10.6" fill="#3fc43f"/>
<text x="711.2" y="227.4" font-family="Liberation Sans, sans-serif" font-size="9.1" fill="#4a4a4a">+1</text>
<text x="723.8" y="227.4" font-family="Liberation Sans, sans-serif" font-size="9.1" fill="#5a5af2">03feb. 5700 Put Δ</text>
<text x="830.5" y="227.4" font-family="Liberation Sans, sans-serif" font-size="9.1" fill="#5a5af2" text-anchor="end">-13.11</text>
<rect x="708" y="230.3" width="2.6" height="10.6" fill="#3fc43f"/>
<text x="711.2" y="239.0" font-family="Liberation Sans, sans-serif" font-size="9.1" fill="#4a4a4a">-1</text>
<text x="721.3" y="239.0" font-family="Liberation Sans, sans-serif" font-size="9.1" fill="#f26464">03feb. 5625 Put Δ</text>
<text x="827.7" y="239.0" font-family="Liberation Sans, sans-serif" font-size="9.1" fill="#f26464" text-anchor="end">-9.51</text>
<rect x="708" y="242.0" width="2.6" height="10.6" fill="#86a8f0"/>
<text x="711.2" y="250.7" font-family="Liberation Sans, sans-serif" font-size="9.1" fill="#4a4a4a">+2</text>
<text x="723.8" y="250.7" font-family="Liberation Sans, sans-serif" font-size="9.1" fill="#5a5af2">03feb. 5625 Put Δ</text>
<text x="830.5" y="250.7" font-family="Liberation Sans, sans-serif" font-size="9.1" fill="#5a5af2" text-anchor="end">-9.51</text>
<rect x="708" y="253.6" width="2.6" height="10.6" fill="#86a8f0"/>
<text x="711.2" y="262.3" font-family="Liberation Sans, sans-serif" font-size="9.1" fill="#4a4a4a">+1</text>
<text x="723.8" y="262.3" font-family="Liberation Sans, sans-serif" font-size="9.1" fill="#5a5af2">03feb. 5775 Put Δ</text>
<text x="831" y="262.3" font-family="Liberation Sans, sans-serif" font-size="9.1" fill="#5a5af2" text-anchor="end">-18.13</text>
<rect x="708" y="265.2" width="2.6" height="10.6" fill="#86a8f0"/>
<text x="711.2" y="273.9" font-family="Liberation Sans, sans-serif" font-size="9.1" fill="#4a4a4a">+2</text>
<text x="723.8" y="273.9" font-family="Liberation Sans, sans-serif" font-size="9.1" fill="#5a5af2">21mar. 5800 Put Δ</text>
<text x="832" y="273.9" font-family="Liberation Sans, sans-serif" font-size="9.1" fill="#5a5af2" text-anchor="end">-27.82</text>
<rect x="708" y="276.8" width="2.6" height="10.6" fill="#86a8f0"/>
<text x="711.2" y="285.5" font-family="Liberation Sans, sans-serif" font-size="9.1" fill="#4a4a4a">-3</text>
<text x="721.3" y="285.5" font-family="Liberation Sans, sans-serif" font-size="9.1" fill="#f26464">03feb. 5700 Put Δ</text>
<text x="828" y="285.5" font-family="Liberation Sans, sans-serif" font-size="9.1" fill="#f26464" text-anchor="end">-13.11</text>
<rect x="708" y="288.4" width="2.6" height="10.6" fill="#86a8f0"/>
<text x="711.2" y="297.1" font-family="Liberation Sans, sans-serif" font-size="9.1" fill="#4a4a4a">-2</text>
<text x="721.3" y="297.1" font-family="Liberation Sans, sans-serif" font-size="9.1" fill="#f26464">03feb. 5900 Put Δ</text>
<text x="828" y="297.1" font-family="Liberation Sans, sans-serif" font-size="9.1" fill="#f26464" text-anchor="end">-30.69</text>
<rect x="701.5" y="417.5" width="96.2" height="46.8" rx="4" fill="#e9f0fb" fill-opacity=".8" stroke="#8a9cb4" stroke-width="1"/>
<text x="708" y="433" font-family="Liberation Sans, sans-serif" font-size="8.8" fill="#6bab6b">03/02/2025 (0)</text>
<text x="708" y="444.5" font-family="Liberation Sans, sans-serif" font-size="8.8" fill="#f27474">21/01/2025 (13) T+14</text>
<text x="708" y="456" font-family="Liberation Sans, sans-serif" font-size="8.8" fill="#7fdc7f">07/01/2025 (27) T+0</text>
<text x="703.5" y="460.3" font-family="Liberation Sans, sans-serif" font-size="9.5" font-weight="bold" fill="#8a2fa0">17.2%</text>
<rect x="653.3" y="486" width="440" height="157.5" rx="4" fill="#e8f0f8" stroke="#7b8ca3" stroke-width="1"/>
<text x="675.5" y="513.9" font-family="Liberation Sans, sans-serif" font-size="8.8" fill="#6a6a6a" text-anchor="middle">PnL</text>
<text x="675.5" y="549.7" font-family="Liberation Sans, sans-serif" font-size="8.8" fill="#6a6a6a" text-anchor="middle">Delta</text>
<text x="675.5" y="577.2" font-family="Liberation Sans, sans-serif" font-size="8.8" fill="#6a6a6a" text-anchor="middle">Gamma</text>
<text x="675.5" y="604.2" font-family="Liberation Sans, sans-serif" font-size="8.8" fill="#6a6a6a" text-anchor="middle">Theta</text>
<text x="675.5" y="632.2" font-family="Liberation Sans, sans-serif" font-size="8.8" fill="#6a6a6a" text-anchor="middle">Vega</text>
<rect x="697.5" y="510.0" width="58.9" height="8.5" fill="#f07078" stroke="#444" stroke-opacity=".75" stroke-width=".8"/><rect x="756.4" y="510.0" width="60.0" height="5.0" fill="#f07078" stroke="#444" stroke-opacity=".75" stroke-width=".8"/><rect x="816.4" y="510.0" width="60.1" height="2.3" fill="#f07078" stroke="#444" stroke-opacity=".75" stroke-width=".8"/><rect x="876.5" y="510.0" width="60.0" height="1.0" fill="#f07078" stroke="#444" stroke-opacity=".75" stroke-width=".8"/><rect x="936.5" y="510.0" width="60.4" height="0.3" fill="#f07078" stroke="#444" stroke-opacity=".75" stroke-width=".8"/>
<path d="M936.5 510H1090" stroke="#444" stroke-width=".8"/>
<rect x="697.5" y="537.2" width="58.9" height="8.8" fill="#5a78f4" stroke="#444" stroke-opacity=".75" stroke-width=".8"/><rect x="756.4" y="539.7" width="60.0" height="6.3" fill="#5a78f4" stroke="#444" stroke-opacity=".75" stroke-width=".8"/><rect x="816.4" y="540.6" width="60.1" height="5.4" fill="#5a78f4" stroke="#444" stroke-opacity=".75" stroke-width=".8"/><rect x="876.5" y="542.2" width="60.0" height="3.8" fill="#5a78f4" stroke="#444" stroke-opacity=".75" stroke-width=".8"/><rect x="936.5" y="544.3" width="60.4" height="1.7" fill="#5a78f4" stroke="#444" stroke-opacity=".75" stroke-width=".8"/><rect x="996.9" y="545.4" width="60.1" height="0.6" fill="#5a78f4" stroke="#444" stroke-opacity=".75" stroke-width=".8"/>
<rect x="1057" y="546" width="30" height="1" fill="#f07078" stroke="#444" stroke-width=".6"/>
<rect x="697.5" y="573.6" width="58.9" height="7.1" fill="#f07078" stroke="#444" stroke-opacity=".75" stroke-width=".8"/><rect x="756.4" y="573.6" width="60.0" height="8.7" fill="#f07078" stroke="#444" stroke-opacity=".75" stroke-width=".8"/><rect x="816.4" y="573.6" width="60.1" height="8.7" fill="#f07078" stroke="#444" stroke-opacity=".75" stroke-width=".8"/><rect x="876.5" y="573.6" width="60.0" height="8.4" fill="#f07078" stroke="#444" stroke-opacity=".75" stroke-width=".8"/><rect x="936.5" y="573.6" width="60.4" height="6.5" fill="#f07078" stroke="#444" stroke-opacity=".75" stroke-width=".8"/><rect x="996.9" y="573.6" width="60.1" height="5.3" fill="#f07078" stroke="#444" stroke-opacity=".75" stroke-width=".8"/><rect x="1057" y="573.6" width="60.0" height="4.2" fill="#f07078" stroke="#444" stroke-opacity=".75" stroke-width=".8"/>
<rect x="697.5" y="594.0" width="58.9" height="6.7" fill="#5a78f4" stroke="#444" stroke-opacity=".75" stroke-width=".8"/><rect x="756.4" y="592.3" width="60.0" height="8.4" fill="#5a78f4" stroke="#444" stroke-opacity=".75" stroke-width=".8"/><rect x="816.4" y="591.3" width="60.1" height="9.4" fill="#5a78f4" stroke="#444" stroke-opacity=".75" stroke-width=".8"/><rect x="876.5" y="591.9" width="60.0" height="8.8" fill="#5a78f4" stroke="#444" stroke-opacity=".75" stroke-width=".8"/><rect x="936.5" y="593.2" width="60.4" height="7.5" fill="#5a78f4" stroke="#444" stroke-opacity=".75" stroke-width=".8"/><rect x="996.9" y="594.1" width="60.1" height="6.6" fill="#5a78f4" stroke="#444" stroke-opacity=".75" stroke-width=".8"/><rect x="1057" y="595.7" width="60.0" height="5.0" fill="#5a78f4" stroke="#444" stroke-opacity=".75" stroke-width=".8"/>
<rect x="697.5" y="619.3" width="58.9" height="8.7" fill="#5a78f4" stroke="#444" stroke-opacity=".75" stroke-width=".8"/><rect x="756.4" y="620.6" width="60.0" height="7.4" fill="#5a78f4" stroke="#444" stroke-opacity=".75" stroke-width=".8"/><rect x="816.4" y="620.6" width="60.1" height="7.4" fill="#5a78f4" stroke="#444" stroke-opacity=".75" stroke-width=".8"/><rect x="876.5" y="621.2" width="60.0" height="6.8" fill="#5a78f4" stroke="#444" stroke-opacity=".75" stroke-width=".8"/><rect x="936.5" y="621.5" width="60.4" height="6.5" fill="#5a78f4" stroke="#444" stroke-opacity=".75" stroke-width=".8"/><rect x="996.9" y="621.5" width="60.1" height="6.5" fill="#5a78f4" stroke="#444" stroke-opacity=".75" stroke-width=".8"/><rect x="1057" y="621.5" width="60.0" height="6.5" fill="#5a78f4" stroke="#444" stroke-opacity=".75" stroke-width=".8"/>
<text x="725.5" y="499.2" font-family="Liberation Sans, sans-serif" font-size="8.8" fill="#f06a6a" text-anchor="middle">-10%</text><text x="785.8" y="499.2" font-family="Liberation Sans, sans-serif" font-size="8.8" fill="#f06a6a" text-anchor="middle">-6%</text><text x="845.5" y="499.2" font-family="Liberation Sans, sans-serif" font-size="8.8" fill="#f06a6a" text-anchor="middle">-4%</text><text x="906.0" y="499.2" font-family="Liberation Sans, sans-serif" font-size="8.8" fill="#f06a6a" text-anchor="middle">-2%</text>
<text x="725.5" y="509.2" font-family="Liberation Sans, sans-serif" font-size="8.8" fill="#f06a6a" text-anchor="middle">-2118</text><text x="785.8" y="509.2" font-family="Liberation Sans, sans-serif" font-size="8.8" fill="#f06a6a" text-anchor="middle">-1349</text><text x="845.5" y="509.2" font-family="Liberation Sans, sans-serif" font-size="8.8" fill="#f06a6a" text-anchor="middle">-748</text><text x="906.0" y="509.2" font-family="Liberation Sans, sans-serif" font-size="8.8" fill="#f06a6a" text-anchor="middle">-322</text>
<text x="1027.0" y="518.2" font-family="Liberation Sans, sans-serif" font-size="8.8" fill="#6a6af6" text-anchor="middle">49</text>
<text x="1027.0" y="527.2" font-family="Liberation Sans, sans-serif" font-size="8.8" fill="#6a6af6" text-anchor="middle">0%</text>
<text x="725.5" y="554.4" font-family="Liberation Sans, sans-serif" font-size="8.8" fill="#6a6af6" text-anchor="middle">16.99</text><text x="785.8" y="554.4" font-family="Liberation Sans, sans-serif" font-size="8.8" fill="#6a6af6" text-anchor="middle">13.73</text><text x="845.5" y="554.4" font-family="Liberation Sans, sans-serif" font-size="8.8" fill="#6a6af6" text-anchor="middle">10.26</text><text x="906.0" y="554.4" font-family="Liberation Sans, sans-serif" font-size="8.8" fill="#6a6af6" text-anchor="middle">6.83</text><text x="1027.0" y="554.4" font-family="Liberation Sans, sans-serif" font-size="8.8" fill="#6a6af6" text-anchor="middle">0.86</text>
<text x="725.5" y="572.8" font-family="Liberation Sans, sans-serif" font-size="8.8" fill="#f06a6a" text-anchor="middle">-0.06</text><text x="785.8" y="572.8" font-family="Liberation Sans, sans-serif" font-size="8.8" fill="#f06a6a" text-anchor="middle">-0.07</text><text x="845.5" y="572.8" font-family="Liberation Sans, sans-serif" font-size="8.8" fill="#f06a6a" text-anchor="middle">-0.07</text><text x="906.0" y="572.8" font-family="Liberation Sans, sans-serif" font-size="8.8" fill="#f06a6a" text-anchor="middle">-0.07</text><text x="1027.0" y="572.8" font-family="Liberation Sans, sans-serif" font-size="8.8" fill="#f06a6a" text-anchor="middle">-0.05</text><text x="1087.5" y="572.8" font-family="Liberation Sans, sans-serif" font-size="8.8" fill="#f06a6a" text-anchor="middle">-0.04</text>
<text x="725.5" y="609.2" font-family="Liberation Sans, sans-serif" font-size="8.8" fill="#6a6af6" text-anchor="middle">54.03</text><text x="785.8" y="609.2" font-family="Liberation Sans, sans-serif" font-size="8.8" fill="#6a6af6" text-anchor="middle">65.42</text><text x="845.5" y="609.2" font-family="Liberation Sans, sans-serif" font-size="8.8" fill="#6a6af6" text-anchor="middle">71.38</text><text x="906.0" y="609.2" font-family="Liberation Sans, sans-serif" font-size="8.8" fill="#6a6af6" text-anchor="middle">71.70</text><text x="1027.0" y="609.2" font-family="Liberation Sans, sans-serif" font-size="8.8" fill="#6a6af6" text-anchor="middle">58.02</text><text x="1087.5" y="609.2" font-family="Liberation Sans, sans-serif" font-size="8.8" fill="#6a6af6" text-anchor="middle">48.20</text>
<text x="725.5" y="636.8" font-family="Liberation Sans, sans-serif" font-size="8.8" fill="#6a6af6" text-anchor="middle">411.03</text><text x="785.8" y="636.8" font-family="Liberation Sans, sans-serif" font-size="8.8" fill="#6a6af6" text-anchor="middle">370.12</text><text x="845.5" y="636.8" font-family="Liberation Sans, sans-serif" font-size="8.8" fill="#6a6af6" text-anchor="middle">340.11</text><text x="906.0" y="636.8" font-family="Liberation Sans, sans-serif" font-size="8.8" fill="#6a6af6" text-anchor="middle">322.04</text><text x="1027.0" y="636.8" font-family="Liberation Sans, sans-serif" font-size="8.8" fill="#6a6af6" text-anchor="middle">315.82</text><text x="1087.5" y="636.8" font-family="Liberation Sans, sans-serif" font-size="8.8" fill="#6a6af6" text-anchor="middle">310.00</text>
<text x="1079" y="551" font-family="Liberation Sans, sans-serif" font-size="8.8" fill="#f06a6a">-</text>
<text x="966" y="499.2" font-family="Liberation Sans, sans-serif" font-size="8.8" fill="#f06a6a" text-anchor="middle">0%</text>
<text x="966" y="509.2" font-family="Liberation Sans, sans-serif" font-size="8.8" fill="#f06a6a" text-anchor="middle">-53</text>
<text x="966" y="554.4" font-family="Liberation Sans, sans-serif" font-size="8.8" fill="#6a6af6" text-anchor="middle">3.04</text>
<text x="966" y="572.8" font-family="Liberation Sans, sans-serif" font-size="8.8" fill="#f06a6a" text-anchor="middle">-0.06</text>
<text x="966" y="609.2" font-family="Liberation Sans, sans-serif" font-size="8.8" fill="#6a6af6" text-anchor="middle">66.63</text>
<text x="966" y="636.8" font-family="Liberation Sans, sans-serif" font-size="8.8" fill="#6a6af6" text-anchor="middle">314.66</text>
<rect x="951.3" y="472" width="42.5" height="171.3" rx="4" fill="#e9f0fa" fill-opacity=".88" stroke="#5e6a7c" stroke-width="1"/>
<text x="972.6" y="481.3" font-family="Liberation Sans, sans-serif" font-size="8.8" fill="#222" text-anchor="middle">6005.50</text>
<text x="972.6" y="509.6" font-family="Liberation Sans, sans-serif" font-size="8.8" fill="#e81c1c" text-anchor="middle">-43</text>
<text x="972.6" y="523.0" font-family="Liberation Sans, sans-serif" font-size="8.8" fill="#e81c1c" text-anchor="middle">-0.2%</text>
<text x="972.6" y="550.0" font-family="Liberation Sans, sans-serif" font-size="8.8" fill="#1c1cec" text-anchor="middle">3.31</text>
<text x="972.6" y="577.4" font-family="Liberation Sans, sans-serif" font-size="8.8" fill="#e81c1c" text-anchor="middle">-0.06</text>
<text x="972.6" y="604.5" font-family="Liberation Sans, sans-serif" font-size="8.8" fill="#1c1cec" text-anchor="middle">66.09</text>
<text x="972.6" y="631.9" font-family="Liberation Sans, sans-serif" font-size="8.8" fill="#1c1cec" text-anchor="middle">314.63</text>
</svg>
<div class="a" style="left:1058px;top:633px;width:30px;height:50px;background:#f1f1f1;border-radius:4px 0 0 0;box-shadow:-1px 0 3px rgba(0,0,0,.25);"></div>
<div class="t" style="top:639.5px;left:1066px;font-size:11px;letter-spacing:0px;">ma</div>
<div class="t" style="top:666px;left:1066px;font-size:11px;letter-spacing:0px;">ma</div>
</body></html>
